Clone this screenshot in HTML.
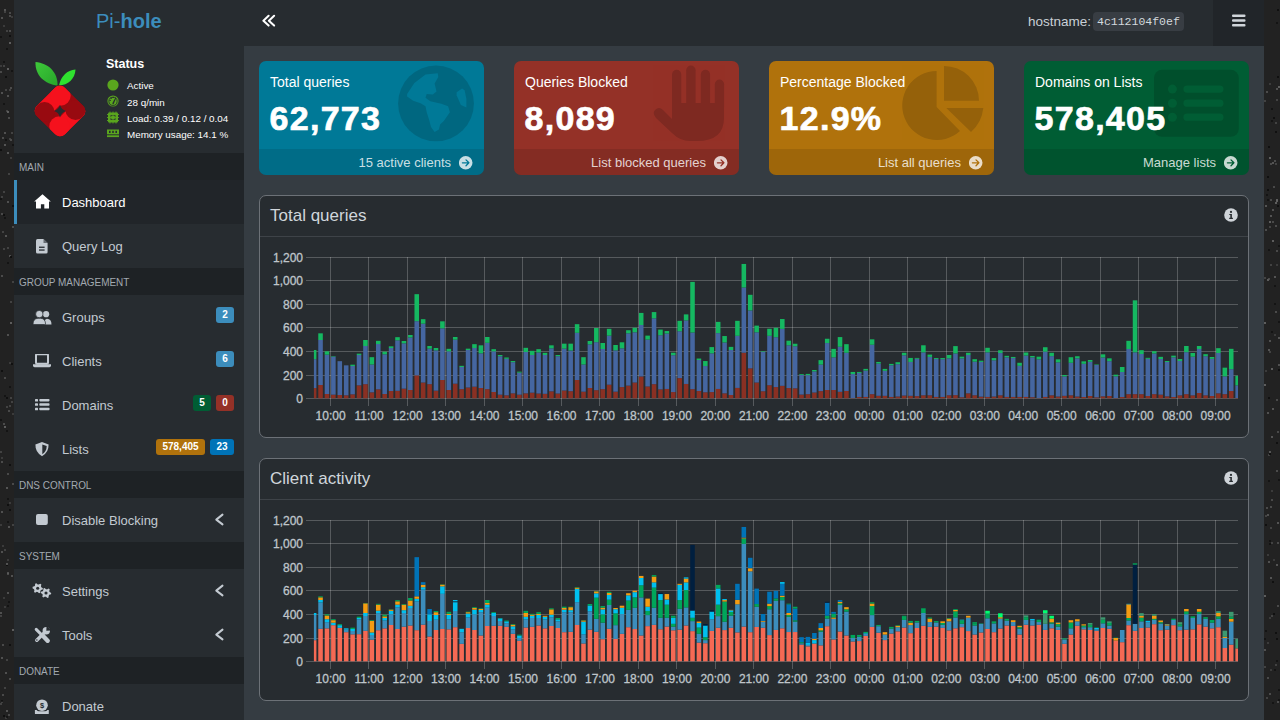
<!DOCTYPE html>
<html><head><meta charset="utf-8">
<style>
*{margin:0;padding:0;box-sizing:border-box}
html,body{width:1280px;height:720px;overflow:hidden;background:#353c42;font-family:"Liberation Sans",sans-serif;color:#c9d0d6}
.abs{position:absolute}
.st{font-size:9.85px;color:#fff;white-space:nowrap;line-height:12px}
#noiseL{left:0;top:0;width:14px;height:720px;background:#222}
#noiseR{left:1264px;top:0;width:16px;height:720px;background:#222}
#side{left:14px;top:0;width:230px;height:720px;background:#272c30;overflow:hidden}
#top{left:244px;top:0;width:1020px;height:46px;background:#272c30}
#burger{left:1213px;top:0;width:51px;height:46px;background:#212529}
.hdr{position:absolute;left:0;width:230px;height:27px;background:#1e2225;color:#a2a9b0;font-size:11.5px;padding-left:5px;line-height:29px}
.hs{display:inline-block;transform:scaleX(0.865);transform-origin:0 50%}
.item{position:absolute;left:0;width:230px;height:44px;color:#c2cad1;font-size:13px;line-height:44px}
.item .lbl{position:absolute;left:48px;top:1px}
.item.active{background:#212529;color:#fff;border-left:3px solid #3c8dbc}
.item svg{position:absolute}
.badge{position:absolute;top:12px;height:16px;border-radius:3px;color:#fff;font-weight:bold;font-size:10px;line-height:15px;text-align:center}
.chev{position:absolute;left:201px;top:16px}
.card{position:absolute;top:61px;width:225px;height:114px;border-radius:7px;overflow:hidden;color:#fff}
.card .ttl{position:absolute;left:11px;top:13px;font-size:14px}
.card .num{position:absolute;left:10.5px;top:38px;font-size:34px;font-weight:bold;letter-spacing:1.3px;-webkit-text-stroke:0.7px #fff}
.card .foot{position:absolute;left:0;top:88px;width:225px;height:26px;background:rgba(0,0,0,0.1)}
.card .ft{position:absolute;right:33px;top:6px;font-size:13px;color:rgba(255,255,255,0.8)}
.card .arr{position:absolute;left:200px;top:6.5px}
.card .ico{position:absolute}
.panel{position:absolute;left:259px;width:990px;background:#272c30;border:1px solid #6c7177;border-radius:7px}
.panel .ph{position:absolute;left:10px;top:10px;font-size:17px;color:#d0d6db}
.panel .sep{position:absolute;left:0;top:40px;width:988px;height:1px;background:#3e4348}
.panel .info{position:absolute;left:964px;top:12px}
#charts{position:absolute;left:0;top:0}
.gl{stroke:#fff;stroke-opacity:0.22;stroke-width:1}
.yl{font-size:12px;fill:#bfc5ca;stroke:#bfc5ca;stroke-width:0.3px;text-anchor:end;font-family:"Liberation Sans",sans-serif}
.xl{font-size:12px;fill:#bfc5ca;stroke:#bfc5ca;stroke-width:0.3px;text-anchor:middle;font-family:"Liberation Sans",sans-serif}
</style></head><body>
<div id="noiseL" class="abs"></div>
<div id="noiseR" class="abs"></div>
<svg style="position:absolute;left:0;top:0" width="1280" height="720"><rect x="7" y="573" width="2" height="2" fill="rgb(80,80,80)" fill-opacity="0.9"/><rect x="8" y="601" width="2" height="2" fill="rgb(14,14,14)" fill-opacity="0.7"/><rect x="12" y="524" width="2" height="2" fill="rgb(80,80,80)" fill-opacity="0.7"/><rect x="1" y="457" width="2" height="2" fill="rgb(70,70,70)" fill-opacity="0.7"/><rect x="1" y="551" width="2" height="2" fill="rgb(100,100,100)" fill-opacity="0.7"/><rect x="9" y="405" width="2" height="2" fill="rgb(80,80,80)" fill-opacity="0.7"/><rect x="9" y="15" width="2" height="2" fill="rgb(90,90,90)" fill-opacity="0.7"/><rect x="0" y="36" width="2" height="2" fill="rgb(14,14,14)" fill-opacity="0.7"/><rect x="9" y="30" width="2" height="2" fill="rgb(80,80,80)" fill-opacity="0.9"/><rect x="7" y="605" width="2" height="2" fill="rgb(14,14,14)" fill-opacity="0.7"/><rect x="10" y="301" width="2" height="2" fill="rgb(80,80,80)" fill-opacity="0.7"/><rect x="10" y="87" width="2" height="2" fill="rgb(80,80,80)" fill-opacity="0.9"/><rect x="6" y="564" width="2" height="2" fill="rgb(14,14,14)" fill-opacity="0.9"/><rect x="5" y="235" width="2" height="2" fill="rgb(90,90,90)" fill-opacity="0.9"/><rect x="0" y="71" width="2" height="2" fill="rgb(90,90,90)" fill-opacity="0.7"/><rect x="6" y="110" width="2" height="2" fill="rgb(70,70,70)" fill-opacity="0.9"/><rect x="1" y="17" width="2" height="2" fill="rgb(100,100,100)" fill-opacity="0.7"/><rect x="3" y="214" width="2" height="2" fill="rgb(14,14,14)" fill-opacity="0.9"/><rect x="6" y="406" width="2" height="2" fill="rgb(80,80,80)" fill-opacity="0.7"/><rect x="9" y="644" width="2" height="2" fill="rgb(14,14,14)" fill-opacity="0.9"/><rect x="5" y="89" width="2" height="2" fill="rgb(70,70,70)" fill-opacity="0.9"/><rect x="0" y="419" width="2" height="2" fill="rgb(14,14,14)" fill-opacity="0.7"/><rect x="3" y="103" width="2" height="2" fill="rgb(14,14,14)" fill-opacity="0.7"/><rect x="7" y="498" width="2" height="2" fill="rgb(14,14,14)" fill-opacity="0.7"/><rect x="7" y="521" width="2" height="2" fill="rgb(14,14,14)" fill-opacity="0.7"/><rect x="6" y="659" width="2" height="2" fill="rgb(80,80,80)" fill-opacity="0.7"/><rect x="6" y="430" width="2" height="2" fill="rgb(14,14,14)" fill-opacity="0.7"/><rect x="4" y="606" width="2" height="2" fill="rgb(70,70,70)" fill-opacity="0.7"/><rect x="3" y="191" width="2" height="2" fill="rgb(80,80,80)" fill-opacity="0.7"/><rect x="0" y="149" width="2" height="2" fill="rgb(14,14,14)" fill-opacity="0.9"/><rect x="4" y="9" width="2" height="2" fill="rgb(90,90,90)" fill-opacity="0.9"/><rect x="4" y="395" width="2" height="2" fill="rgb(14,14,14)" fill-opacity="0.7"/><rect x="1" y="213" width="2" height="2" fill="rgb(90,90,90)" fill-opacity="0.7"/><rect x="0" y="615" width="2" height="2" fill="rgb(70,70,70)" fill-opacity="0.9"/><rect x="9" y="464" width="2" height="2" fill="rgb(14,14,14)" fill-opacity="0.9"/><rect x="9" y="138" width="2" height="2" fill="rgb(80,80,80)" fill-opacity="0.7"/><rect x="10" y="157" width="2" height="2" fill="rgb(70,70,70)" fill-opacity="0.7"/><rect x="9" y="255" width="2" height="2" fill="rgb(100,100,100)" fill-opacity="0.7"/><rect x="2" y="644" width="2" height="2" fill="rgb(90,90,90)" fill-opacity="0.7"/><rect x="10" y="397" width="2" height="2" fill="rgb(80,80,80)" fill-opacity="0.7"/><rect x="6" y="48" width="2" height="2" fill="rgb(14,14,14)" fill-opacity="0.7"/><rect x="0" y="524" width="2" height="2" fill="rgb(70,70,70)" fill-opacity="0.7"/><rect x="11" y="401" width="2" height="2" fill="rgb(70,70,70)" fill-opacity="0.9"/><rect x="9" y="502" width="2" height="2" fill="rgb(70,70,70)" fill-opacity="0.7"/><rect x="11" y="70" width="2" height="2" fill="rgb(14,14,14)" fill-opacity="0.7"/><rect x="7" y="572" width="2" height="2" fill="rgb(100,100,100)" fill-opacity="0.7"/><rect x="4" y="217" width="2" height="2" fill="rgb(14,14,14)" fill-opacity="0.7"/><rect x="1" y="275" width="2" height="2" fill="rgb(80,80,80)" fill-opacity="0.9"/><rect x="3" y="61" width="2" height="2" fill="rgb(14,14,14)" fill-opacity="0.7"/><rect x="4" y="377" width="2" height="2" fill="rgb(90,90,90)" fill-opacity="0.7"/><rect x="1" y="370" width="2" height="2" fill="rgb(14,14,14)" fill-opacity="0.9"/><rect x="5" y="672" width="2" height="2" fill="rgb(100,100,100)" fill-opacity="0.7"/><rect x="9" y="35" width="2" height="2" fill="rgb(14,14,14)" fill-opacity="0.9"/><rect x="5" y="717" width="2" height="2" fill="rgb(70,70,70)" fill-opacity="0.7"/><rect x="0" y="612" width="2" height="2" fill="rgb(100,100,100)" fill-opacity="0.7"/><rect x="7" y="68" width="2" height="2" fill="rgb(100,100,100)" fill-opacity="0.9"/><rect x="5" y="139" width="2" height="2" fill="rgb(14,14,14)" fill-opacity="0.7"/><rect x="7" y="559" width="2" height="2" fill="rgb(70,70,70)" fill-opacity="0.7"/><rect x="11" y="132" width="2" height="2" fill="rgb(70,70,70)" fill-opacity="0.9"/><rect x="1" y="701" width="2" height="2" fill="rgb(80,80,80)" fill-opacity="0.7"/><rect x="6" y="30" width="2" height="2" fill="rgb(80,80,80)" fill-opacity="0.7"/><rect x="9" y="678" width="2" height="2" fill="rgb(80,80,80)" fill-opacity="0.9"/><rect x="9" y="12" width="2" height="2" fill="rgb(90,90,90)" fill-opacity="0.7"/><rect x="1" y="92" width="2" height="2" fill="rgb(100,100,100)" fill-opacity="0.7"/><rect x="4" y="426" width="2" height="2" fill="rgb(100,100,100)" fill-opacity="0.9"/><rect x="6" y="710" width="2" height="2" fill="rgb(90,90,90)" fill-opacity="0.9"/><rect x="7" y="473" width="2" height="2" fill="rgb(90,90,90)" fill-opacity="0.7"/><rect x="8" y="526" width="2" height="2" fill="rgb(14,14,14)" fill-opacity="0.9"/><rect x="9" y="89" width="2" height="2" fill="rgb(80,80,80)" fill-opacity="0.7"/><rect x="3" y="715" width="2" height="2" fill="rgb(14,14,14)" fill-opacity="0.9"/><rect x="12" y="629" width="2" height="2" fill="rgb(100,100,100)" fill-opacity="0.9"/><rect x="4" y="11" width="2" height="2" fill="rgb(70,70,70)" fill-opacity="0.9"/><rect x="2" y="694" width="2" height="2" fill="rgb(90,90,90)" fill-opacity="0.7"/><rect x="8" y="173" width="2" height="2" fill="rgb(70,70,70)" fill-opacity="0.9"/><rect x="7" y="247" width="2" height="2" fill="rgb(70,70,70)" fill-opacity="0.9"/><rect x="10" y="256" width="2" height="2" fill="rgb(14,14,14)" fill-opacity="0.9"/><rect x="12" y="205" width="2" height="2" fill="rgb(14,14,14)" fill-opacity="0.9"/><rect x="3" y="597" width="2" height="2" fill="rgb(70,70,70)" fill-opacity="0.7"/><rect x="2" y="137" width="2" height="2" fill="rgb(80,80,80)" fill-opacity="0.9"/><rect x="0" y="65" width="2" height="2" fill="rgb(70,70,70)" fill-opacity="0.7"/><rect x="1" y="461" width="2" height="2" fill="rgb(80,80,80)" fill-opacity="0.9"/><rect x="3" y="423" width="2" height="2" fill="rgb(80,80,80)" fill-opacity="0.9"/><rect x="10" y="322" width="2" height="2" fill="rgb(100,100,100)" fill-opacity="0.9"/><rect x="5" y="76" width="2" height="2" fill="rgb(14,14,14)" fill-opacity="0.9"/><rect x="9" y="42" width="2" height="2" fill="rgb(100,100,100)" fill-opacity="0.9"/><rect x="9" y="362" width="2" height="2" fill="rgb(70,70,70)" fill-opacity="0.7"/><rect x="10" y="139" width="2" height="2" fill="rgb(80,80,80)" fill-opacity="0.9"/><rect x="3" y="25" width="2" height="2" fill="rgb(70,70,70)" fill-opacity="0.7"/><rect x="12" y="144" width="2" height="2" fill="rgb(14,14,14)" fill-opacity="0.7"/><rect x="7" y="111" width="2" height="2" fill="rgb(100,100,100)" fill-opacity="0.9"/><rect x="1" y="700" width="2" height="2" fill="rgb(14,14,14)" fill-opacity="0.7"/><rect x="7" y="262" width="2" height="2" fill="rgb(14,14,14)" fill-opacity="0.7"/><rect x="12" y="483" width="2" height="2" fill="rgb(90,90,90)" fill-opacity="0.7"/><rect x="2" y="231" width="2" height="2" fill="rgb(70,70,70)" fill-opacity="0.9"/><rect x="8" y="714" width="2" height="2" fill="rgb(90,90,90)" fill-opacity="0.7"/><rect x="6" y="716" width="2" height="2" fill="rgb(14,14,14)" fill-opacity="0.7"/><rect x="6" y="397" width="2" height="2" fill="rgb(14,14,14)" fill-opacity="0.9"/><rect x="7" y="201" width="2" height="2" fill="rgb(100,100,100)" fill-opacity="0.7"/><rect x="6" y="563" width="2" height="2" fill="rgb(90,90,90)" fill-opacity="0.9"/><rect x="7" y="334" width="2" height="2" fill="rgb(100,100,100)" fill-opacity="0.7"/><rect x="1" y="657" width="2" height="2" fill="rgb(100,100,100)" fill-opacity="0.7"/><rect x="3" y="248" width="2" height="2" fill="rgb(80,80,80)" fill-opacity="0.7"/><rect x="4" y="549" width="2" height="2" fill="rgb(70,70,70)" fill-opacity="0.9"/><rect x="11" y="16" width="2" height="2" fill="rgb(70,70,70)" fill-opacity="0.7"/><rect x="0" y="451" width="2" height="2" fill="rgb(70,70,70)" fill-opacity="0.9"/><rect x="12" y="281" width="2" height="2" fill="rgb(80,80,80)" fill-opacity="0.7"/><rect x="3" y="65" width="2" height="2" fill="rgb(80,80,80)" fill-opacity="0.7"/><rect x="2" y="545" width="2" height="2" fill="rgb(70,70,70)" fill-opacity="0.7"/><rect x="7" y="152" width="2" height="2" fill="rgb(90,90,90)" fill-opacity="0.9"/><rect x="7" y="592" width="2" height="2" fill="rgb(100,100,100)" fill-opacity="0.7"/><rect x="12" y="226" width="2" height="2" fill="rgb(80,80,80)" fill-opacity="0.9"/><rect x="11" y="575" width="2" height="2" fill="rgb(100,100,100)" fill-opacity="0.7"/><rect x="8" y="526" width="2" height="2" fill="rgb(90,90,90)" fill-opacity="0.9"/><rect x="4" y="687" width="2" height="2" fill="rgb(80,80,80)" fill-opacity="0.7"/><rect x="4" y="144" width="2" height="2" fill="rgb(90,90,90)" fill-opacity="0.9"/><rect x="9" y="509" width="2" height="2" fill="rgb(14,14,14)" fill-opacity="0.9"/><rect x="8" y="117" width="2" height="2" fill="rgb(90,90,90)" fill-opacity="0.7"/><rect x="9" y="386" width="2" height="2" fill="rgb(14,14,14)" fill-opacity="0.7"/><rect x="8" y="410" width="2" height="2" fill="rgb(90,90,90)" fill-opacity="0.7"/><rect x="7" y="95" width="2" height="2" fill="rgb(100,100,100)" fill-opacity="0.7"/><rect x="1" y="551" width="2" height="2" fill="rgb(80,80,80)" fill-opacity="0.9"/><rect x="12" y="413" width="2" height="2" fill="rgb(70,70,70)" fill-opacity="0.7"/><rect x="7" y="504" width="2" height="2" fill="rgb(14,14,14)" fill-opacity="0.9"/><rect x="6" y="487" width="2" height="2" fill="rgb(90,90,90)" fill-opacity="0.9"/><rect x="1" y="196" width="2" height="2" fill="rgb(80,80,80)" fill-opacity="0.7"/><rect x="4" y="132" width="2" height="2" fill="rgb(100,100,100)" fill-opacity="0.7"/><rect x="0" y="198" width="2" height="2" fill="rgb(14,14,14)" fill-opacity="0.7"/><rect x="0" y="703" width="2" height="2" fill="rgb(70,70,70)" fill-opacity="0.9"/><rect x="11" y="363" width="2" height="2" fill="rgb(14,14,14)" fill-opacity="0.9"/><rect x="1" y="511" width="2" height="2" fill="rgb(100,100,100)" fill-opacity="0.7"/><rect x="1277" y="522" width="2" height="2" fill="rgb(90,90,90)" fill-opacity="0.9"/><rect x="1275" y="202" width="2" height="2" fill="rgb(100,100,100)" fill-opacity="0.9"/><rect x="1264" y="384" width="2" height="2" fill="rgb(100,100,100)" fill-opacity="0.9"/><rect x="1277" y="542" width="2" height="2" fill="rgb(90,90,90)" fill-opacity="0.7"/><rect x="1272" y="209" width="2" height="2" fill="rgb(100,100,100)" fill-opacity="0.7"/><rect x="1272" y="221" width="2" height="2" fill="rgb(90,90,90)" fill-opacity="0.7"/><rect x="1267" y="642" width="2" height="2" fill="rgb(70,70,70)" fill-opacity="0.7"/><rect x="1269" y="617" width="2" height="2" fill="rgb(70,70,70)" fill-opacity="0.7"/><rect x="1267" y="199" width="2" height="2" fill="rgb(14,14,14)" fill-opacity="0.7"/><rect x="1278" y="245" width="2" height="2" fill="rgb(14,14,14)" fill-opacity="0.7"/><rect x="1268" y="397" width="2" height="2" fill="rgb(14,14,14)" fill-opacity="0.9"/><rect x="1277" y="431" width="2" height="2" fill="rgb(90,90,90)" fill-opacity="0.7"/><rect x="1267" y="412" width="2" height="2" fill="rgb(100,100,100)" fill-opacity="0.7"/><rect x="1265" y="205" width="2" height="2" fill="rgb(90,90,90)" fill-opacity="0.9"/><rect x="1278" y="369" width="2" height="2" fill="rgb(14,14,14)" fill-opacity="0.9"/><rect x="1272" y="702" width="2" height="2" fill="rgb(14,14,14)" fill-opacity="0.7"/><rect x="1271" y="108" width="2" height="2" fill="rgb(14,14,14)" fill-opacity="0.7"/><rect x="1276" y="564" width="2" height="2" fill="rgb(90,90,90)" fill-opacity="0.9"/><rect x="1266" y="194" width="2" height="2" fill="rgb(14,14,14)" fill-opacity="0.7"/><rect x="1267" y="176" width="2" height="2" fill="rgb(14,14,14)" fill-opacity="0.9"/><rect x="1278" y="689" width="2" height="2" fill="rgb(14,14,14)" fill-opacity="0.7"/><rect x="1266" y="697" width="2" height="2" fill="rgb(80,80,80)" fill-opacity="0.7"/><rect x="1276" y="99" width="2" height="2" fill="rgb(70,70,70)" fill-opacity="0.9"/><rect x="1271" y="436" width="2" height="2" fill="rgb(90,90,90)" fill-opacity="0.9"/><rect x="1270" y="215" width="2" height="2" fill="rgb(90,90,90)" fill-opacity="0.9"/><rect x="1264" y="649" width="2" height="2" fill="rgb(100,100,100)" fill-opacity="0.7"/><rect x="1277" y="205" width="2" height="2" fill="rgb(14,14,14)" fill-opacity="0.9"/><rect x="1271" y="368" width="2" height="2" fill="rgb(100,100,100)" fill-opacity="0.9"/><rect x="1270" y="199" width="2" height="2" fill="rgb(90,90,90)" fill-opacity="0.7"/><rect x="1265" y="524" width="2" height="2" fill="rgb(14,14,14)" fill-opacity="0.9"/><rect x="1278" y="86" width="2" height="2" fill="rgb(100,100,100)" fill-opacity="0.9"/><rect x="1273" y="613" width="2" height="2" fill="rgb(14,14,14)" fill-opacity="0.9"/><rect x="1276" y="264" width="2" height="2" fill="rgb(70,70,70)" fill-opacity="0.7"/><rect x="1275" y="163" width="2" height="2" fill="rgb(80,80,80)" fill-opacity="0.7"/><rect x="1278" y="337" width="2" height="2" fill="rgb(90,90,90)" fill-opacity="0.9"/><rect x="1276" y="442" width="2" height="2" fill="rgb(14,14,14)" fill-opacity="0.9"/><rect x="1267" y="189" width="2" height="2" fill="rgb(14,14,14)" fill-opacity="0.9"/><rect x="1268" y="480" width="2" height="2" fill="rgb(14,14,14)" fill-opacity="0.7"/><rect x="1278" y="364" width="2" height="2" fill="rgb(100,100,100)" fill-opacity="0.7"/><rect x="1267" y="279" width="2" height="2" fill="rgb(100,100,100)" fill-opacity="0.9"/><rect x="1269" y="221" width="2" height="2" fill="rgb(100,100,100)" fill-opacity="0.9"/><rect x="1273" y="186" width="2" height="2" fill="rgb(90,90,90)" fill-opacity="0.7"/><rect x="1270" y="527" width="2" height="2" fill="rgb(80,80,80)" fill-opacity="0.7"/><rect x="1275" y="122" width="2" height="2" fill="rgb(80,80,80)" fill-opacity="0.7"/><rect x="1265" y="630" width="2" height="2" fill="rgb(14,14,14)" fill-opacity="0.7"/><rect x="1268" y="454" width="2" height="2" fill="rgb(80,80,80)" fill-opacity="0.7"/><rect x="1276" y="200" width="2" height="2" fill="rgb(100,100,100)" fill-opacity="0.9"/><rect x="1264" y="100" width="2" height="2" fill="rgb(70,70,70)" fill-opacity="0.9"/><rect x="1268" y="349" width="2" height="2" fill="rgb(90,90,90)" fill-opacity="0.9"/><rect x="1272" y="581" width="2" height="2" fill="rgb(14,14,14)" fill-opacity="0.9"/><rect x="1276" y="660" width="2" height="2" fill="rgb(14,14,14)" fill-opacity="0.7"/><rect x="1270" y="163" width="2" height="2" fill="rgb(80,80,80)" fill-opacity="0.9"/><rect x="1266" y="507" width="2" height="2" fill="rgb(90,90,90)" fill-opacity="0.7"/><rect x="1270" y="506" width="2" height="2" fill="rgb(80,80,80)" fill-opacity="0.9"/><rect x="1272" y="408" width="2" height="2" fill="rgb(90,90,90)" fill-opacity="0.9"/><rect x="1269" y="543" width="2" height="2" fill="rgb(70,70,70)" fill-opacity="0.9"/><rect x="1274" y="276" width="2" height="2" fill="rgb(90,90,90)" fill-opacity="0.9"/><rect x="1274" y="303" width="2" height="2" fill="rgb(14,14,14)" fill-opacity="0.7"/><rect x="1276" y="250" width="2" height="2" fill="rgb(90,90,90)" fill-opacity="0.7"/><rect x="1274" y="160" width="2" height="2" fill="rgb(80,80,80)" fill-opacity="0.9"/><rect x="1264" y="322" width="2" height="2" fill="rgb(100,100,100)" fill-opacity="0.9"/><rect x="1264" y="595" width="2" height="2" fill="rgb(100,100,100)" fill-opacity="0.9"/><rect x="1265" y="229" width="2" height="2" fill="rgb(80,80,80)" fill-opacity="0.9"/><rect x="1268" y="249" width="2" height="2" fill="rgb(14,14,14)" fill-opacity="0.7"/><rect x="1278" y="479" width="2" height="2" fill="rgb(14,14,14)" fill-opacity="0.7"/><rect x="1273" y="117" width="2" height="2" fill="rgb(14,14,14)" fill-opacity="0.9"/><rect x="1271" y="120" width="2" height="2" fill="rgb(14,14,14)" fill-opacity="0.7"/><rect x="1269" y="540" width="2" height="2" fill="rgb(14,14,14)" fill-opacity="0.7"/><rect x="1269" y="453" width="2" height="2" fill="rgb(14,14,14)" fill-opacity="0.9"/><rect x="1271" y="615" width="2" height="2" fill="rgb(70,70,70)" fill-opacity="0.9"/><rect x="1269" y="543" width="2" height="2" fill="rgb(14,14,14)" fill-opacity="0.9"/><rect x="1275" y="131" width="2" height="2" fill="rgb(14,14,14)" fill-opacity="0.9"/><rect x="1265" y="515" width="2" height="2" fill="rgb(70,70,70)" fill-opacity="0.9"/><rect x="1268" y="278" width="2" height="2" fill="rgb(90,90,90)" fill-opacity="0.7"/><rect x="1274" y="285" width="2" height="2" fill="rgb(14,14,14)" fill-opacity="0.7"/><rect x="1267" y="514" width="2" height="2" fill="rgb(100,100,100)" fill-opacity="0.7"/><rect x="1278" y="699" width="2" height="2" fill="rgb(14,14,14)" fill-opacity="0.7"/><rect x="1264" y="277" width="2" height="2" fill="rgb(70,70,70)" fill-opacity="0.9"/><rect x="1264" y="638" width="2" height="2" fill="rgb(14,14,14)" fill-opacity="0.7"/><rect x="1267" y="554" width="2" height="2" fill="rgb(70,70,70)" fill-opacity="0.7"/><rect x="1276" y="88" width="2" height="2" fill="rgb(100,100,100)" fill-opacity="0.7"/><rect x="1272" y="240" width="2" height="2" fill="rgb(100,100,100)" fill-opacity="0.9"/><rect x="1271" y="490" width="2" height="2" fill="rgb(70,70,70)" fill-opacity="0.7"/><rect x="1269" y="351" width="2" height="2" fill="rgb(80,80,80)" fill-opacity="0.7"/><rect x="1277" y="76" width="2" height="2" fill="rgb(14,14,14)" fill-opacity="0.9"/><rect x="1276" y="638" width="2" height="2" fill="rgb(14,14,14)" fill-opacity="0.9"/><rect x="1270" y="264" width="2" height="2" fill="rgb(80,80,80)" fill-opacity="0.7"/><rect x="1269" y="157" width="2" height="2" fill="rgb(100,100,100)" fill-opacity="0.9"/><rect x="1268" y="561" width="2" height="2" fill="rgb(100,100,100)" fill-opacity="0.7"/><rect x="1270" y="669" width="2" height="2" fill="rgb(70,70,70)" fill-opacity="0.7"/><rect x="1271" y="331" width="2" height="2" fill="rgb(14,14,14)" fill-opacity="0.7"/><rect x="1270" y="577" width="2" height="2" fill="rgb(90,90,90)" fill-opacity="0.9"/><rect x="1277" y="701" width="2" height="2" fill="rgb(80,80,80)" fill-opacity="0.9"/><rect x="1277" y="9" width="2" height="2" fill="rgb(14,14,14)" fill-opacity="0.9"/><rect x="1267" y="677" width="2" height="2" fill="rgb(90,90,90)" fill-opacity="0.7"/><rect x="1275" y="311" width="2" height="2" fill="rgb(80,80,80)" fill-opacity="0.9"/><rect x="1268" y="146" width="2" height="2" fill="rgb(14,14,14)" fill-opacity="0.9"/><rect x="1274" y="334" width="2" height="2" fill="rgb(70,70,70)" fill-opacity="0.7"/><rect x="1269" y="451" width="2" height="2" fill="rgb(90,90,90)" fill-opacity="0.9"/><rect x="1271" y="542" width="2" height="2" fill="rgb(70,70,70)" fill-opacity="0.9"/><rect x="1269" y="226" width="2" height="2" fill="rgb(80,80,80)" fill-opacity="0.7"/><rect x="1265" y="370" width="2" height="2" fill="rgb(70,70,70)" fill-opacity="0.7"/><rect x="1269" y="693" width="2" height="2" fill="rgb(80,80,80)" fill-opacity="0.9"/><rect x="1276" y="199" width="2" height="2" fill="rgb(100,100,100)" fill-opacity="0.9"/><rect x="1276" y="399" width="2" height="2" fill="rgb(90,90,90)" fill-opacity="0.7"/><rect x="1277" y="605" width="2" height="2" fill="rgb(90,90,90)" fill-opacity="0.7"/><rect x="1266" y="91" width="2" height="2" fill="rgb(80,80,80)" fill-opacity="0.9"/><rect x="1276" y="22" width="2" height="2" fill="rgb(14,14,14)" fill-opacity="0.7"/><rect x="1272" y="162" width="2" height="2" fill="rgb(90,90,90)" fill-opacity="0.9"/><rect x="1264" y="666" width="2" height="2" fill="rgb(80,80,80)" fill-opacity="0.7"/><rect x="1273" y="559" width="2" height="2" fill="rgb(70,70,70)" fill-opacity="0.7"/><rect x="1269" y="83" width="2" height="2" fill="rgb(70,70,70)" fill-opacity="0.7"/><rect x="1278" y="321" width="2" height="2" fill="rgb(14,14,14)" fill-opacity="0.7"/><rect x="1274" y="669" width="2" height="2" fill="rgb(14,14,14)" fill-opacity="0.7"/><rect x="1275" y="664" width="2" height="2" fill="rgb(80,80,80)" fill-opacity="0.7"/><rect x="1275" y="225" width="2" height="2" fill="rgb(80,80,80)" fill-opacity="0.9"/><rect x="1276" y="470" width="2" height="2" fill="rgb(80,80,80)" fill-opacity="0.9"/><rect x="1269" y="340" width="2" height="2" fill="rgb(100,100,100)" fill-opacity="0.7"/><rect x="1271" y="499" width="2" height="2" fill="rgb(90,90,90)" fill-opacity="0.7"/><rect x="1275" y="632" width="2" height="2" fill="rgb(14,14,14)" fill-opacity="0.9"/></svg>
<div id="side" class="abs">
  <div class="abs" style="left:82px;top:10px;font-size:20px;color:#3c8dbc">Pi-<b>hole</b></div>
  <svg style="position:absolute;left:-14px;top:0" width="100" height="150" viewBox="0 0 100 150">
<defs><clipPath id="dia"><rect x="-20" y="-20" width="40" height="40" rx="7" transform="translate(60,111) rotate(45)"/></clipPath>
<linearGradient id="lf1" x1="0" y1="0" x2="1" y2="1"><stop offset="0" stop-color="#3ec93a"/><stop offset="1" stop-color="#27a52a"/></linearGradient></defs>
<path d="M57.5,85.5 C45,84 35,76 35.5,62 C48,63 58,72 57.5,85.5 Z" fill="url(#lf1)"/>
<path d="M59,85.5 C61,76 67,70 75.5,69.5 C75,79 68,85 59,85.5 Z" fill="#2fe12f"/>
<g clip-path="url(#dia)">
<rect x="30" y="80" width="60" height="62" fill="#980a10"/>
<path d="M60,95.5 L58,78 L24,111 L44.5,112 L54,111 L60,105 Z" fill="#f5111d"/>
<path d="M60,126.5 L62,144 L96,111 L75.5,110 L66,111 L60,117 Z" fill="#f5111d"/>
<circle cx="60.5" cy="95.5" r="10.2" fill="#f5111d"/>
<circle cx="59.5" cy="126.5" r="10.2" fill="#f5111d"/>
<circle cx="44.5" cy="112" r="10" fill="#980a10"/>
<circle cx="75.5" cy="110" r="10" fill="#980a10"/>
<path d="M60,104.8 Q61.2,109.6 66,111 Q61.2,112.4 60,117.6 Q58.8,112.4 54,111 Q58.8,109.6 60,104.8 Z" fill="#272c30"/>
</g></svg>
  <div class="abs" style="left:92px;top:57px;font-size:12.5px;font-weight:bold;color:#fff">Status</div>
  <svg style="position:absolute;left:-14px;top:0" width="130" height="150" viewBox="0 0 130 150">
<circle cx="113" cy="85" r="5.6" fill="#5aa61e"/>
<circle cx="113" cy="101" r="5.6" fill="#5aa61e"/>
<circle cx="113" cy="101.3" r="4.1" fill="none" stroke="#272c30" stroke-width="0.9"/>
<path d="M112.2,103.6 L115.4,97.6 L116.2,98.1 L113.6,104.2 Z" fill="#272c30"/>
<circle cx="110.2" cy="100.4" r="0.7" fill="#272c30"/><circle cx="111.2" cy="98.2" r="0.7" fill="#272c30"/><circle cx="113.2" cy="97.4" r="0.7" fill="#272c30"/>
<rect x="108" y="112.5" width="10" height="10" rx="1" fill="#5aa61e"/>
<rect x="110.3" y="114.8" width="5.4" height="5.4" fill="#272c30"/>
<rect x="111.2" y="115.7" width="3.6" height="3.6" fill="#5aa61e"/>
<path d="M107,114.5h12M107,117.5h12M107,120.5h12M110,111.5v12M113,111.5v12M116,111.5v12" stroke="#5aa61e" stroke-width="0.9"/>
<rect x="107" y="129.5" width="12" height="4.8" fill="#5aa61e"/>
<rect x="109" y="130.8" width="1.6" height="2.2" fill="#272c30"/>
<rect x="112.2" y="130.8" width="1.6" height="2.2" fill="#272c30"/>
<rect x="115.4" y="130.8" width="1.6" height="2.2" fill="#272c30"/>
<rect x="107" y="135.3" width="12" height="1.8" fill="#5aa61e"/>
</svg><div class="abs st" style="left:113px;top:80.4px">Active</div><div class="abs st" style="left:113px;top:96.6px">28 q/min</div><div class="abs st" style="left:113px;top:113.3px">Load: 0.39 / 0.12 / 0.04</div><div class="abs st" style="left:113px;top:129.1px">Memory usage: 14.1 %</div>
  <div class="hdr" style="top:153px"><span class="hs">MAIN</span></div>
  <div class="item active" style="top:180px"><svg class="abs" style="left:16.8px;top:14.4px;position:absolute" width="17" height="15" viewBox="0 0 17 15" ><path d="M8.5,0.3 L16.8,7.6 L15,7.6 L15,14.5 L10.3,14.5 L10.3,10.3 L6.9,10.3 L6.9,14.5 L2,14.5 L2,7.6 L0.2,7.6 Z" fill="#fff"/></svg><span class="lbl" style="left:45px">Dashboard</span></div>
  <div class="item" style="top:224px"><svg class="abs" style="left:22.3px;top:14.5px;position:absolute" width="12" height="15" viewBox="0 0 12 15" ><path d="M1.5,0 L7.5,0 L11.6,4.1 L11.6,13.1 Q11.6,14.6 10.1,14.6 L1.5,14.6 Q0,14.6 0,13.1 L0,1.5 Q0,0 1.5,0 Z" fill="#c3cad1"/><path d="M7.5,0 L7.5,4.1 L11.6,4.1 Z" fill="#272c30" opacity="0.6"/><rect x="3" y="7.6" width="5.6" height="1.3" fill="#272c30"/><rect x="3" y="10.4" width="5.6" height="1.3" fill="#272c30"/></svg><span class="lbl">Query Log</span></div>
  <div class="hdr" style="top:268px"><span class="hs">GROUP MANAGEMENT</span></div>
  <div class="item" style="top:295px"><svg class="abs" style="left:19px;top:14.5px;position:absolute" width="19" height="15" viewBox="0 0 19 15" ><circle cx="13.1" cy="4.2" r="3.1" fill="#c3cad1"/><path d="M11,14.5 Q11.2,9 14,8.8 Q18.5,9 18.5,14.5 Z" fill="#c3cad1"/><circle cx="6.3" cy="4.1" r="3.7" fill="#c3cad1" stroke="#272c30" stroke-width="0.7"/><path d="M0,14.5 Q0,8.5 5,8.3 L7.6,8.3 Q12.6,8.5 12.6,14.5 Z" fill="#c3cad1" stroke="#272c30" stroke-width="0.7"/></svg><span class="lbl">Groups</span><span class="badge" style="left:202px;width:18px;background:#3c8dbc">2</span></div>
  <div class="item" style="top:339px"><svg class="abs" style="left:19px;top:15px;position:absolute" width="18" height="14" viewBox="0 0 18 14" ><rect x="3" y="0.2" width="12" height="9.6" rx="1" fill="none" stroke="#c3cad1" stroke-width="2"/><path d="M0,10.2 L18,10.2 L18,11.4 Q18,13.2 16.4,13.2 L1.6,13.2 Q0,13.2 0,11.4 Z" fill="#c3cad1"/></svg><span class="lbl">Clients</span><span class="badge" style="left:202px;width:18px;background:#3c8dbc">6</span></div>
  <div class="item" style="top:383px"><svg class="abs" style="left:21px;top:14px;position:absolute" width="15" height="14" viewBox="0 0 15 14" ><rect x="0" y="1.8999999999999986" width="3" height="2.6" rx="0.6" fill="#c3cad1"/><rect x="4.3" y="2.0" width="10.2" height="2.4" rx="0.8" fill="#c3cad1"/><rect x="0" y="6.199999999999999" width="3" height="2.6" rx="0.6" fill="#c3cad1"/><rect x="4.3" y="6.300000000000001" width="10.2" height="2.4" rx="0.8" fill="#c3cad1"/><rect x="0" y="10.7" width="3" height="2.6" rx="0.6" fill="#c3cad1"/><rect x="4.3" y="10.8" width="10.2" height="2.4" rx="0.8" fill="#c3cad1"/></svg><span class="lbl">Domains</span><span class="badge" style="left:179px;width:18px;background:#005d34">5</span><span class="badge" style="left:202px;width:18px;background:#943127">0</span></div>
  <div class="item" style="top:427px"><svg class="abs" style="left:21px;top:14.8px;position:absolute" width="14" height="15" viewBox="0 0 14 15" ><path d="M7,0 L13.6,2.6 Q13.8,10.5 7,14.2 Q0.2,10.5 0.4,2.6 Z" fill="#c3cad1"/><path d="M7.3,2.5 L11.7,4.1 Q11.5,9.8 7.3,12.2 Z" fill="#272c30"/></svg><span class="lbl">Lists</span><span class="badge" style="left:142px;width:49px;background:#b0720c">578,405</span><span class="badge" style="left:196px;width:24px;background:#0073b7">23</span></div>
  <div class="hdr" style="top:471px"><span class="hs">DNS CONTROL</span></div>
  <div class="item" style="top:498px"><svg class="abs" style="left:22.1px;top:16px;position:absolute" width="12" height="11" viewBox="0 0 12 11" ><rect x="0" y="0" width="11.8" height="10.9" rx="2" fill="#c3cad1"/></svg><span class="lbl">Disable Blocking</span><svg class="abs" style="left:200px;top:15px;position:absolute" width="10" height="13" viewBox="0 0 10 13" ><path d="M8.5,1.6 L2.3,6.6 L8.5,11.4" fill="none" stroke="#c3cad1" stroke-width="2" stroke-linecap="round" stroke-linejoin="round"/></svg></div>
  <div class="hdr" style="top:542px"><span class="hs">SYSTEM</span></div>
  <div class="item" style="top:569px"><svg class="abs" style="left:18px;top:13px;position:absolute" width="22" height="20" viewBox="0 0 22 20" ><polygon points="10.90,6.20 10.72,7.55 8.94,8.07 8.35,8.85 8.30,10.70 7.05,11.22 5.70,9.94 4.73,9.82 3.10,10.70 2.02,9.88 2.46,8.07 2.08,7.17 0.50,6.20 0.68,4.85 2.46,4.33 3.05,3.55 3.10,1.70 4.35,1.18 5.70,2.46 6.67,2.58 8.30,1.70 9.38,2.52 8.94,4.33 9.32,5.23" fill="#c3cad1"/><circle cx="5.7" cy="6.2" r="3.22" fill="#c3cad1"/><circle cx="5.7" cy="6.2" r="1.56" fill="#272c30"/><polygon points="19.20,11.00 19.02,12.35 17.24,12.87 16.65,13.65 16.60,15.50 15.35,16.02 14.00,14.74 13.03,14.62 11.40,15.50 10.32,14.68 10.76,12.87 10.38,11.97 8.80,11.00 8.98,9.65 10.76,9.13 11.35,8.35 11.40,6.50 12.65,5.98 14.00,7.26 14.97,7.38 16.60,6.50 17.68,7.32 17.24,9.13 17.62,10.03" fill="#c3cad1"/><circle cx="14" cy="11" r="3.22" fill="#c3cad1"/><circle cx="14" cy="11" r="1.56" fill="#272c30"/></svg><span class="lbl">Settings</span><svg class="abs" style="left:200px;top:15px;position:absolute" width="10" height="13" viewBox="0 0 10 13" ><path d="M8.5,1.6 L2.3,6.6 L8.5,11.4" fill="none" stroke="#c3cad1" stroke-width="2" stroke-linecap="round" stroke-linejoin="round"/></svg></div>
  <div class="item" style="top:613px"><svg class="abs" style="left:20px;top:14px;position:absolute" width="17" height="16" viewBox="0 0 17 16" ><path d="M2.2,2.4 L13.6,13.8" stroke="#c3cad1" stroke-width="3" stroke-linecap="round"/><path d="M9.8,9.8 L13.6,13.8" stroke="#c3cad1" stroke-width="4.4" stroke-linecap="round"/><path d="M2.8,13.2 L10.8,5.2" stroke="#c3cad1" stroke-width="3.4" stroke-linecap="round"/><circle cx="12.3" cy="3.8" r="3.7" fill="#c3cad1"/><path d="M12.3,3.8 L12.6,-1.5 L17.8,3.5 Z" fill="#272c30"/><circle cx="2.9" cy="12.9" r="0.75" fill="#272c30"/></svg><span class="lbl">Tools</span><svg class="abs" style="left:200px;top:15px;position:absolute" width="10" height="13" viewBox="0 0 10 13" ><path d="M8.5,1.6 L2.3,6.6 L8.5,11.4" fill="none" stroke="#c3cad1" stroke-width="2" stroke-linecap="round" stroke-linejoin="round"/></svg></div>
  <div class="hdr" style="top:657px"><span class="hs">DONATE</span></div>
  <div class="item" style="top:684px"><svg class="abs" style="left:20px;top:14px;position:absolute" width="16" height="17" viewBox="0 0 16 17" ><circle cx="8" cy="7.2" r="5.8" fill="#c3cad1"/><text x="8" y="9.8" font-size="7.5" font-weight="bold" text-anchor="middle" fill="#272c30" font-family="Liberation Sans">$</text><path d="M0.9,12 L2.6,12 Q3.5,13.3 5,13.3 L11,13.3 Q12.5,13.3 13.4,12 L14.8,12 L14.8,15.5 Q14.8,16 14.3,16 L1.4,16 Q0.9,16 0.9,15.5 Z" fill="#c3cad1"/></svg><span class="lbl">Donate</span></div>
</div>
<div id="top" class="abs"><svg class="abs" style="left:18px;top:14px;position:absolute" width="14" height="14" viewBox="0 0 14 14" ><path d="M6.6,1.8 L1.4,6.7 L6.6,11.6 M12.1,1.8 L6.9,6.7 L12.1,11.6" fill="none" stroke="#fff" stroke-width="2" stroke-linecap="round" stroke-linejoin="round"/></svg><div class="abs" style="left:784px;top:14px;font-size:13.5px;color:#c9d0d6">hostname:</div><div class="abs" style="left:849px;top:12px;width:91px;height:19px;background:#383d43;border-radius:4px"></div><div class="abs" style="left:853px;top:15px;font-family:'Liberation Mono',monospace;font-size:11.5px;color:#d3d9de">4c112104f0ef</div></div>
<div id="burger" class="abs"><svg class="abs" style="left:19px;top:14px;position:absolute" width="14" height="13" viewBox="0 0 14 13" ><rect x="0" y="0.5" width="13.5" height="2.4" rx="1" fill="#d0d5da"/><rect x="0" y="5.3" width="13.5" height="2.4" rx="1" fill="#d0d5da"/><rect x="0" y="10.1" width="13.5" height="2.4" rx="1" fill="#d0d5da"/></svg></div>
<div class="card" style="left:259px;background:#007997"><svg class="ico" width="225" height="114" viewBox="0 0 225 114" style="left:0;top:0"><circle cx="177" cy="42.4" r="37.9" fill="rgba(0,0,0,0.15)"/><path d="M148.1,33.0 L155.4,22.0 L166.5,13.4 L178.7,12.2 L179.3,15.9 L175.6,22.6 L177.5,30.6 L173.8,33.6 L167.7,33.0 L166.5,36.7 L171.3,40.3 L182.3,42.8 L189.1,45.2 L190.9,51.3 L184.8,59.9 L181.1,63.6 L179.9,68.5 L175.6,70.9 L172.0,66.0 L170.1,58.7 L167.7,51.3 L166.5,45.2 L161.6,42.2 L154.2,39.7 L148.1,35.5 Z" fill="#007997"/><path d="M197.6,31.2 L203.1,27.5 L205.6,29.3 L207.4,37.9 L207.4,46.5 L201.9,44.0 L197.6,34.2 Z" fill="#007997"/></svg><div class="ttl">Total queries</div><div class="num">62,773</div><div class="foot"><div class="ft">15 active clients</div><svg class="abs" style="left:200px;top:6.5px;position:absolute" width="14" height="14" viewBox="0 0 14 14" ><circle cx="6.7" cy="6.8" r="6.8" fill="rgba(255,255,255,0.78)"/><path d="M3.4,6.8 L9.9,6.8 M7,3.9 L9.9,6.8 L7,9.7" fill="none" stroke="#007997" stroke-width="1.3" stroke-linecap="round" stroke-linejoin="round"/></svg></div></div>
<div class="card" style="left:514px;background:#943127"><svg class="ico" width="225" height="114" viewBox="0 0 225 114" style="left:0;top:0"><g fill="#000" opacity="0.15"><path d="M158,42 L210,42 L210,57 Q210,80 183,80 L176,80 Q166,80 158,72 L142,57 Q138,52 141,49 Q145,45 149,49 L158,58 Z"/><rect x="158" y="8.8" width="9.3" height="40" rx="4.65"/><rect x="172.2" y="4.6" width="9.4" height="45" rx="4.7"/><rect x="186.8" y="8.8" width="9.3" height="40" rx="4.65"/><rect x="200.8" y="18.6" width="9.3" height="32" rx="4.65"/></g></svg><div class="ttl">Queries Blocked</div><div class="num">8,089</div><div class="foot"><div class="ft">List blocked queries</div><svg class="abs" style="left:200px;top:6.5px;position:absolute" width="14" height="14" viewBox="0 0 14 14" ><circle cx="6.7" cy="6.8" r="6.8" fill="rgba(255,255,255,0.78)"/><path d="M3.4,6.8 L9.9,6.8 M7,3.9 L9.9,6.8 L7,9.7" fill="none" stroke="#943127" stroke-width="1.3" stroke-linecap="round" stroke-linejoin="round"/></svg></div></div>
<div class="card" style="left:769px;background:#b0720c"><svg class="ico" width="225" height="114" viewBox="0 0 225 114" style="left:0;top:0"><g fill="#000" opacity="0.15"><path d="M167.6,10 L167.6,46 L191,70 A34.5,34.5 0 1 1 167.6,10 Z"/><path d="M175,4.9 A35,35 0 0 1 210,39.7 L175,39.7 Z"/><path d="M177.3,47 L214.3,47 A37,37 0 0 1 202,71 Z"/></g></svg><div class="ttl">Percentage Blocked</div><div class="num">12.9%</div><div class="foot"><div class="ft">List all queries</div><svg class="abs" style="left:200px;top:6.5px;position:absolute" width="14" height="14" viewBox="0 0 14 14" ><circle cx="6.7" cy="6.8" r="6.8" fill="rgba(255,255,255,0.78)"/><path d="M3.4,6.8 L9.9,6.8 M7,3.9 L9.9,6.8 L7,9.7" fill="none" stroke="#b0720c" stroke-width="1.3" stroke-linecap="round" stroke-linejoin="round"/></svg></div></div>
<div class="card" style="left:1024px;background:#005d34"><svg class="ico" width="225" height="114" viewBox="0 0 225 114" style="left:0;top:0"><rect x="130" y="8.8" width="84.8" height="67" rx="8" fill="rgba(0,0,0,0.15)"/><g fill="#005d34"><circle cx="148.4" cy="28.1" r="4.5"/><circle cx="148.4" cy="42.2" r="4.5"/><circle cx="148.4" cy="56.2" r="4.5"/><rect x="159.4" y="24.4" width="40.1" height="7.3" rx="3.65"/><rect x="159.4" y="38.5" width="40.1" height="7.3" rx="3.65"/><rect x="159.4" y="52.5" width="40.1" height="7.3" rx="3.65"/></g></svg><div class="ttl">Domains on Lists</div><div class="num">578,405</div><div class="foot"><div class="ft">Manage lists</div><svg class="abs" style="left:200px;top:6.5px;position:absolute" width="14" height="14" viewBox="0 0 14 14" ><circle cx="6.7" cy="6.8" r="6.8" fill="rgba(255,255,255,0.78)"/><path d="M3.4,6.8 L9.9,6.8 M7,3.9 L9.9,6.8 L7,9.7" fill="none" stroke="#005d34" stroke-width="1.3" stroke-linecap="round" stroke-linejoin="round"/></svg></div></div>
<div class="panel" style="top:195px;height:243px"><div class="ph">Total queries</div><div class="sep"></div><svg class="abs" style="left:964px;top:12px;position:absolute" width="14" height="14" viewBox="0 0 14 14" ><circle cx="7" cy="7" r="6.8" fill="#cfd4d9"/><circle cx="7" cy="3.9" r="1.1" fill="#272c30"/><path d="M5.3,6 L7.9,6 L7.9,9.8 L8.9,9.8 L8.9,11 L5.2,11 L5.2,9.8 L6.3,9.8 L6.3,7.1 L5.3,7.1 Z" fill="#272c30"/></svg></div>
<div class="panel" style="top:458px;height:243px"><div class="ph">Client activity</div><div class="sep"></div><svg class="abs" style="left:964px;top:12px;position:absolute" width="14" height="14" viewBox="0 0 14 14" ><circle cx="7" cy="7" r="6.8" fill="#cfd4d9"/><circle cx="7" cy="3.9" r="1.1" fill="#272c30"/><path d="M5.3,6 L7.9,6 L7.9,9.8 L8.9,9.8 L8.9,11 L5.2,11 L5.2,9.8 L6.3,9.8 L6.3,7.1 L5.3,7.1 Z" fill="#272c30"/></svg></div>
<svg id="charts" width="1280" height="720" viewBox="0 0 1280 720">
<line x1="306" y1="257.5" x2="1238" y2="257.5" class="gl"/>
<text x="303" y="261.8" class="yl">1,200</text>
<line x1="306" y1="280.5" x2="1238" y2="280.5" class="gl"/>
<text x="303" y="284.8" class="yl">1,000</text>
<line x1="306" y1="304.5" x2="1238" y2="304.5" class="gl"/>
<text x="303" y="308.8" class="yl">800</text>
<line x1="306" y1="327.5" x2="1238" y2="327.5" class="gl"/>
<text x="303" y="331.8" class="yl">600</text>
<line x1="306" y1="351.5" x2="1238" y2="351.5" class="gl"/>
<text x="303" y="355.8" class="yl">400</text>
<line x1="306" y1="375.5" x2="1238" y2="375.5" class="gl"/>
<text x="303" y="379.8" class="yl">200</text>
<line x1="306" y1="398.5" x2="1238" y2="398.5" class="gl"/>
<text x="303" y="402.8" class="yl">0</text>
<line x1="330.5" y1="257" x2="330.5" y2="406" class="gl"/>
<text x="330.6" y="420" class="xl">10:00</text>
<line x1="368.5" y1="257" x2="368.5" y2="406" class="gl"/>
<text x="369.1" y="420" class="xl">11:00</text>
<line x1="407.5" y1="257" x2="407.5" y2="406" class="gl"/>
<text x="407.6" y="420" class="xl">12:00</text>
<line x1="445.5" y1="257" x2="445.5" y2="406" class="gl"/>
<text x="446.0" y="420" class="xl">13:00</text>
<line x1="484.5" y1="257" x2="484.5" y2="406" class="gl"/>
<text x="484.5" y="420" class="xl">14:00</text>
<line x1="522.5" y1="257" x2="522.5" y2="406" class="gl"/>
<text x="523.0" y="420" class="xl">15:00</text>
<line x1="561.5" y1="257" x2="561.5" y2="406" class="gl"/>
<text x="561.5" y="420" class="xl">16:00</text>
<line x1="599.5" y1="257" x2="599.5" y2="406" class="gl"/>
<text x="600.0" y="420" class="xl">17:00</text>
<line x1="638.5" y1="257" x2="638.5" y2="406" class="gl"/>
<text x="638.4" y="420" class="xl">18:00</text>
<line x1="676.5" y1="257" x2="676.5" y2="406" class="gl"/>
<text x="676.9" y="420" class="xl">19:00</text>
<line x1="715.5" y1="257" x2="715.5" y2="406" class="gl"/>
<text x="715.4" y="420" class="xl">20:00</text>
<line x1="753.5" y1="257" x2="753.5" y2="406" class="gl"/>
<text x="753.9" y="420" class="xl">21:00</text>
<line x1="792.5" y1="257" x2="792.5" y2="406" class="gl"/>
<text x="792.4" y="420" class="xl">22:00</text>
<line x1="830.5" y1="257" x2="830.5" y2="406" class="gl"/>
<text x="830.8" y="420" class="xl">23:00</text>
<line x1="869.5" y1="257" x2="869.5" y2="406" class="gl"/>
<text x="869.3" y="420" class="xl">00:00</text>
<line x1="907.5" y1="257" x2="907.5" y2="406" class="gl"/>
<text x="907.8" y="420" class="xl">01:00</text>
<line x1="946.5" y1="257" x2="946.5" y2="406" class="gl"/>
<text x="946.3" y="420" class="xl">02:00</text>
<line x1="984.5" y1="257" x2="984.5" y2="406" class="gl"/>
<text x="984.8" y="420" class="xl">03:00</text>
<line x1="1023.5" y1="257" x2="1023.5" y2="406" class="gl"/>
<text x="1023.2" y="420" class="xl">04:00</text>
<line x1="1061.5" y1="257" x2="1061.5" y2="406" class="gl"/>
<text x="1061.7" y="420" class="xl">05:00</text>
<line x1="1100.5" y1="257" x2="1100.5" y2="406" class="gl"/>
<text x="1100.2" y="420" class="xl">06:00</text>
<line x1="1138.5" y1="257" x2="1138.5" y2="406" class="gl"/>
<text x="1138.7" y="420" class="xl">07:00</text>
<line x1="1177.5" y1="257" x2="1177.5" y2="406" class="gl"/>
<text x="1177.2" y="420" class="xl">08:00</text>
<line x1="1215.5" y1="257" x2="1215.5" y2="406" class="gl"/>
<text x="1215.6" y="420" class="xl">09:00</text>
<rect x="313.90" y="388.00" width="2.50" height="10.30" fill="#8a3023"/>
<rect x="313.90" y="359.17" width="2.50" height="28.83" fill="#4566a1"/>
<rect x="313.90" y="350.00" width="2.50" height="9.17" fill="#15b861"/>
<rect x="318.27" y="385.00" width="4.55" height="13.30" fill="#8a3023"/>
<rect x="318.27" y="340.00" width="4.55" height="45.00" fill="#4566a1"/>
<rect x="318.27" y="333.33" width="4.55" height="6.67" fill="#15b861"/>
<rect x="324.69" y="394.00" width="4.55" height="4.30" fill="#8a3023"/>
<rect x="324.69" y="354.67" width="4.55" height="39.33" fill="#4566a1"/>
<rect x="324.69" y="351.33" width="4.55" height="3.33" fill="#15b861"/>
<rect x="331.10" y="394.67" width="4.55" height="3.63" fill="#8a3023"/>
<rect x="331.10" y="356.67" width="4.55" height="38.00" fill="#4566a1"/>
<rect x="331.10" y="356.17" width="4.55" height="0.50" fill="#15b861"/>
<rect x="337.51" y="395.00" width="4.55" height="3.30" fill="#8a3023"/>
<rect x="337.51" y="361.17" width="4.55" height="33.83" fill="#4566a1"/>
<rect x="343.93" y="395.33" width="4.55" height="2.97" fill="#8a3023"/>
<rect x="343.93" y="365.33" width="4.55" height="30.00" fill="#4566a1"/>
<rect x="350.34" y="394.33" width="4.55" height="3.97" fill="#8a3023"/>
<rect x="350.34" y="366.00" width="4.55" height="28.33" fill="#4566a1"/>
<rect x="350.34" y="364.67" width="4.55" height="1.33" fill="#15b861"/>
<rect x="356.75" y="385.33" width="4.55" height="12.97" fill="#8a3023"/>
<rect x="356.75" y="355.00" width="4.55" height="30.33" fill="#4566a1"/>
<rect x="356.75" y="353.67" width="4.55" height="1.33" fill="#15b861"/>
<rect x="363.17" y="384.17" width="4.55" height="14.13" fill="#8a3023"/>
<rect x="363.17" y="346.00" width="4.55" height="38.17" fill="#4566a1"/>
<rect x="363.17" y="340.00" width="4.55" height="6.00" fill="#15b861"/>
<rect x="369.58" y="392.33" width="4.55" height="5.97" fill="#8a3023"/>
<rect x="369.58" y="364.50" width="4.55" height="27.83" fill="#4566a1"/>
<rect x="369.58" y="357.17" width="4.55" height="7.33" fill="#15b861"/>
<rect x="375.99" y="389.33" width="4.55" height="8.97" fill="#8a3023"/>
<rect x="375.99" y="344.00" width="4.55" height="45.33" fill="#4566a1"/>
<rect x="375.99" y="340.83" width="4.55" height="3.17" fill="#15b861"/>
<rect x="382.41" y="394.00" width="4.55" height="4.30" fill="#8a3023"/>
<rect x="382.41" y="354.33" width="4.55" height="39.67" fill="#4566a1"/>
<rect x="382.41" y="351.67" width="4.55" height="2.67" fill="#15b861"/>
<rect x="388.82" y="391.00" width="4.55" height="7.30" fill="#8a3023"/>
<rect x="388.82" y="348.00" width="4.55" height="43.00" fill="#4566a1"/>
<rect x="388.82" y="346.33" width="4.55" height="1.67" fill="#15b861"/>
<rect x="395.23" y="390.83" width="4.55" height="7.47" fill="#8a3023"/>
<rect x="395.23" y="340.33" width="4.55" height="50.50" fill="#4566a1"/>
<rect x="395.23" y="337.17" width="4.55" height="3.17" fill="#15b861"/>
<rect x="401.65" y="388.67" width="4.55" height="9.63" fill="#8a3023"/>
<rect x="401.65" y="343.33" width="4.55" height="45.33" fill="#4566a1"/>
<rect x="401.65" y="341.00" width="4.55" height="2.33" fill="#15b861"/>
<rect x="408.06" y="390.00" width="4.55" height="8.30" fill="#8a3023"/>
<rect x="408.06" y="337.50" width="4.55" height="52.50" fill="#4566a1"/>
<rect x="408.06" y="335.00" width="4.55" height="2.50" fill="#15b861"/>
<rect x="414.47" y="375.33" width="4.55" height="22.97" fill="#8a3023"/>
<rect x="414.47" y="321.17" width="4.55" height="54.17" fill="#4566a1"/>
<rect x="414.47" y="294.17" width="4.55" height="27.00" fill="#15b861"/>
<rect x="420.89" y="382.50" width="4.55" height="15.80" fill="#8a3023"/>
<rect x="420.89" y="323.67" width="4.55" height="58.83" fill="#4566a1"/>
<rect x="420.89" y="319.17" width="4.55" height="4.50" fill="#15b861"/>
<rect x="427.30" y="384.17" width="4.55" height="14.13" fill="#8a3023"/>
<rect x="427.30" y="348.67" width="4.55" height="35.50" fill="#4566a1"/>
<rect x="427.30" y="346.00" width="4.55" height="2.67" fill="#15b861"/>
<rect x="433.71" y="390.67" width="4.55" height="7.63" fill="#8a3023"/>
<rect x="433.71" y="350.33" width="4.55" height="40.33" fill="#4566a1"/>
<rect x="433.71" y="348.00" width="4.55" height="2.33" fill="#15b861"/>
<rect x="440.13" y="380.00" width="4.55" height="18.30" fill="#8a3023"/>
<rect x="440.13" y="328.33" width="4.55" height="51.67" fill="#4566a1"/>
<rect x="440.13" y="321.33" width="4.55" height="7.00" fill="#15b861"/>
<rect x="446.54" y="390.00" width="4.55" height="8.30" fill="#8a3023"/>
<rect x="446.54" y="351.33" width="4.55" height="38.67" fill="#4566a1"/>
<rect x="446.54" y="348.83" width="4.55" height="2.50" fill="#15b861"/>
<rect x="452.95" y="383.67" width="4.55" height="14.63" fill="#8a3023"/>
<rect x="452.95" y="339.67" width="4.55" height="44.00" fill="#4566a1"/>
<rect x="452.95" y="337.00" width="4.55" height="2.67" fill="#15b861"/>
<rect x="459.37" y="389.17" width="4.55" height="9.13" fill="#8a3023"/>
<rect x="459.37" y="367.00" width="4.55" height="22.17" fill="#4566a1"/>
<rect x="459.37" y="365.83" width="4.55" height="1.17" fill="#15b861"/>
<rect x="465.78" y="387.50" width="4.55" height="10.80" fill="#8a3023"/>
<rect x="465.78" y="350.00" width="4.55" height="37.50" fill="#4566a1"/>
<rect x="465.78" y="348.67" width="4.55" height="1.33" fill="#15b861"/>
<rect x="472.19" y="386.67" width="4.55" height="11.63" fill="#8a3023"/>
<rect x="472.19" y="348.00" width="4.55" height="38.67" fill="#4566a1"/>
<rect x="472.19" y="344.17" width="4.55" height="3.83" fill="#15b861"/>
<rect x="478.61" y="388.00" width="4.55" height="10.30" fill="#8a3023"/>
<rect x="478.61" y="353.33" width="4.55" height="34.67" fill="#4566a1"/>
<rect x="478.61" y="345.33" width="4.55" height="8.00" fill="#15b861"/>
<rect x="485.02" y="389.17" width="4.55" height="9.13" fill="#8a3023"/>
<rect x="485.02" y="342.83" width="4.55" height="46.33" fill="#4566a1"/>
<rect x="485.02" y="337.00" width="4.55" height="5.83" fill="#15b861"/>
<rect x="491.43" y="392.00" width="4.55" height="6.30" fill="#8a3023"/>
<rect x="491.43" y="351.33" width="4.55" height="40.67" fill="#4566a1"/>
<rect x="491.43" y="349.17" width="4.55" height="2.17" fill="#15b861"/>
<rect x="497.85" y="394.67" width="4.55" height="3.63" fill="#8a3023"/>
<rect x="497.85" y="356.17" width="4.55" height="38.50" fill="#4566a1"/>
<rect x="497.85" y="355.00" width="4.55" height="1.17" fill="#15b861"/>
<rect x="504.26" y="395.33" width="4.55" height="2.97" fill="#8a3023"/>
<rect x="504.26" y="358.83" width="4.55" height="36.50" fill="#4566a1"/>
<rect x="504.26" y="357.50" width="4.55" height="1.33" fill="#15b861"/>
<rect x="510.67" y="393.33" width="4.55" height="4.97" fill="#8a3023"/>
<rect x="510.67" y="362.17" width="4.55" height="31.17" fill="#4566a1"/>
<rect x="510.67" y="361.00" width="4.55" height="1.17" fill="#15b861"/>
<rect x="517.09" y="394.67" width="4.55" height="3.63" fill="#8a3023"/>
<rect x="517.09" y="372.67" width="4.55" height="22.00" fill="#4566a1"/>
<rect x="517.09" y="371.67" width="4.55" height="1.00" fill="#15b861"/>
<rect x="523.50" y="393.33" width="4.55" height="4.97" fill="#8a3023"/>
<rect x="523.50" y="352.00" width="4.55" height="41.33" fill="#4566a1"/>
<rect x="523.50" y="347.83" width="4.55" height="4.17" fill="#15b861"/>
<rect x="529.91" y="392.67" width="4.55" height="5.63" fill="#8a3023"/>
<rect x="529.91" y="355.00" width="4.55" height="37.67" fill="#4566a1"/>
<rect x="529.91" y="350.83" width="4.55" height="4.17" fill="#15b861"/>
<rect x="536.33" y="393.50" width="4.55" height="4.80" fill="#8a3023"/>
<rect x="536.33" y="352.50" width="4.55" height="41.00" fill="#4566a1"/>
<rect x="536.33" y="349.17" width="4.55" height="3.33" fill="#15b861"/>
<rect x="542.74" y="393.83" width="4.55" height="4.47" fill="#8a3023"/>
<rect x="542.74" y="355.00" width="4.55" height="38.83" fill="#4566a1"/>
<rect x="542.74" y="352.83" width="4.55" height="2.17" fill="#15b861"/>
<rect x="549.15" y="391.33" width="4.55" height="6.97" fill="#8a3023"/>
<rect x="549.15" y="348.33" width="4.55" height="43.00" fill="#4566a1"/>
<rect x="549.15" y="345.33" width="4.55" height="3.00" fill="#15b861"/>
<rect x="555.57" y="393.50" width="4.55" height="4.80" fill="#8a3023"/>
<rect x="555.57" y="356.17" width="4.55" height="37.33" fill="#4566a1"/>
<rect x="555.57" y="355.00" width="4.55" height="1.17" fill="#15b861"/>
<rect x="561.98" y="390.50" width="4.55" height="7.80" fill="#8a3023"/>
<rect x="561.98" y="348.67" width="4.55" height="41.83" fill="#4566a1"/>
<rect x="561.98" y="343.67" width="4.55" height="5.00" fill="#15b861"/>
<rect x="568.39" y="391.17" width="4.55" height="7.13" fill="#8a3023"/>
<rect x="568.39" y="350.50" width="4.55" height="40.67" fill="#4566a1"/>
<rect x="568.39" y="343.67" width="4.55" height="6.83" fill="#15b861"/>
<rect x="574.81" y="380.00" width="4.55" height="18.30" fill="#8a3023"/>
<rect x="574.81" y="332.83" width="4.55" height="47.17" fill="#4566a1"/>
<rect x="574.81" y="324.17" width="4.55" height="8.67" fill="#15b861"/>
<rect x="581.22" y="391.67" width="4.55" height="6.63" fill="#8a3023"/>
<rect x="581.22" y="364.50" width="4.55" height="27.17" fill="#4566a1"/>
<rect x="581.22" y="357.17" width="4.55" height="7.33" fill="#15b861"/>
<rect x="587.63" y="388.00" width="4.55" height="10.30" fill="#8a3023"/>
<rect x="587.63" y="344.33" width="4.55" height="43.67" fill="#4566a1"/>
<rect x="587.63" y="341.00" width="4.55" height="3.33" fill="#15b861"/>
<rect x="594.05" y="390.17" width="4.55" height="8.13" fill="#8a3023"/>
<rect x="594.05" y="342.17" width="4.55" height="48.00" fill="#4566a1"/>
<rect x="594.05" y="328.00" width="4.55" height="14.17" fill="#15b861"/>
<rect x="600.46" y="389.17" width="4.55" height="9.13" fill="#8a3023"/>
<rect x="600.46" y="349.00" width="4.55" height="40.17" fill="#4566a1"/>
<rect x="600.46" y="343.00" width="4.55" height="6.00" fill="#15b861"/>
<rect x="606.87" y="384.67" width="4.55" height="13.63" fill="#8a3023"/>
<rect x="606.87" y="335.67" width="4.55" height="49.00" fill="#4566a1"/>
<rect x="606.87" y="328.83" width="4.55" height="6.83" fill="#15b861"/>
<rect x="613.29" y="391.67" width="4.55" height="6.63" fill="#8a3023"/>
<rect x="613.29" y="350.33" width="4.55" height="41.33" fill="#4566a1"/>
<rect x="613.29" y="345.00" width="4.55" height="5.33" fill="#15b861"/>
<rect x="619.70" y="387.08" width="4.55" height="11.22" fill="#8a3023"/>
<rect x="619.70" y="348.33" width="4.55" height="38.75" fill="#4566a1"/>
<rect x="619.70" y="342.29" width="4.55" height="6.04" fill="#15b861"/>
<rect x="626.11" y="385.62" width="4.55" height="12.68" fill="#8a3023"/>
<rect x="626.11" y="333.33" width="4.55" height="52.29" fill="#4566a1"/>
<rect x="626.11" y="330.21" width="4.55" height="3.12" fill="#15b861"/>
<rect x="632.52" y="382.50" width="4.55" height="15.80" fill="#8a3023"/>
<rect x="632.52" y="332.29" width="4.55" height="50.21" fill="#4566a1"/>
<rect x="632.52" y="327.71" width="4.55" height="4.58" fill="#15b861"/>
<rect x="638.94" y="376.46" width="4.55" height="21.84" fill="#8a3023"/>
<rect x="638.94" y="325.00" width="4.55" height="51.46" fill="#4566a1"/>
<rect x="638.94" y="312.92" width="4.55" height="12.08" fill="#15b861"/>
<rect x="645.35" y="386.46" width="4.55" height="11.84" fill="#8a3023"/>
<rect x="645.35" y="339.58" width="4.55" height="46.88" fill="#4566a1"/>
<rect x="645.35" y="335.62" width="4.55" height="3.96" fill="#15b861"/>
<rect x="651.76" y="384.17" width="4.55" height="14.13" fill="#8a3023"/>
<rect x="651.76" y="318.33" width="4.55" height="65.83" fill="#4566a1"/>
<rect x="651.76" y="312.08" width="4.55" height="6.25" fill="#15b861"/>
<rect x="658.18" y="389.38" width="4.55" height="8.93" fill="#8a3023"/>
<rect x="658.18" y="335.21" width="4.55" height="54.17" fill="#4566a1"/>
<rect x="658.18" y="329.58" width="4.55" height="5.62" fill="#15b861"/>
<rect x="664.59" y="388.96" width="4.55" height="9.34" fill="#8a3023"/>
<rect x="664.59" y="333.54" width="4.55" height="55.42" fill="#4566a1"/>
<rect x="664.59" y="331.04" width="4.55" height="2.50" fill="#15b861"/>
<rect x="671.00" y="392.08" width="4.55" height="6.22" fill="#8a3023"/>
<rect x="671.00" y="355.21" width="4.55" height="36.88" fill="#4566a1"/>
<rect x="671.00" y="352.71" width="4.55" height="2.50" fill="#15b861"/>
<rect x="677.42" y="378.12" width="4.55" height="20.18" fill="#8a3023"/>
<rect x="677.42" y="331.25" width="4.55" height="46.88" fill="#4566a1"/>
<rect x="677.42" y="320.83" width="4.55" height="10.42" fill="#15b861"/>
<rect x="683.83" y="383.96" width="4.55" height="14.34" fill="#8a3023"/>
<rect x="683.83" y="320.42" width="4.55" height="63.54" fill="#4566a1"/>
<rect x="683.83" y="314.38" width="4.55" height="6.04" fill="#15b861"/>
<rect x="690.24" y="389.17" width="4.55" height="9.13" fill="#8a3023"/>
<rect x="690.24" y="332.50" width="4.55" height="56.67" fill="#4566a1"/>
<rect x="690.24" y="281.88" width="4.55" height="50.62" fill="#15b861"/>
<rect x="696.66" y="391.04" width="4.55" height="7.26" fill="#8a3023"/>
<rect x="696.66" y="360.00" width="4.55" height="31.04" fill="#4566a1"/>
<rect x="696.66" y="358.54" width="4.55" height="1.46" fill="#15b861"/>
<rect x="703.07" y="392.29" width="4.55" height="6.01" fill="#8a3023"/>
<rect x="703.07" y="366.04" width="4.55" height="26.25" fill="#4566a1"/>
<rect x="703.07" y="361.04" width="4.55" height="5.00" fill="#15b861"/>
<rect x="709.48" y="392.08" width="4.55" height="6.22" fill="#8a3023"/>
<rect x="709.48" y="353.33" width="4.55" height="38.75" fill="#4566a1"/>
<rect x="709.48" y="347.08" width="4.55" height="6.25" fill="#15b861"/>
<rect x="715.90" y="388.96" width="4.55" height="9.34" fill="#8a3023"/>
<rect x="715.90" y="333.12" width="4.55" height="55.83" fill="#4566a1"/>
<rect x="715.90" y="321.88" width="4.55" height="11.25" fill="#15b861"/>
<rect x="722.31" y="393.33" width="4.55" height="4.97" fill="#8a3023"/>
<rect x="722.31" y="342.50" width="4.55" height="50.83" fill="#4566a1"/>
<rect x="722.31" y="336.04" width="4.55" height="6.46" fill="#15b861"/>
<rect x="728.72" y="395.00" width="4.55" height="3.30" fill="#8a3023"/>
<rect x="728.72" y="350.00" width="4.55" height="45.00" fill="#4566a1"/>
<rect x="728.72" y="346.88" width="4.55" height="3.12" fill="#15b861"/>
<rect x="735.14" y="387.92" width="4.55" height="10.38" fill="#8a3023"/>
<rect x="735.14" y="335.83" width="4.55" height="52.08" fill="#4566a1"/>
<rect x="735.14" y="320.83" width="4.55" height="15.00" fill="#15b861"/>
<rect x="741.55" y="352.71" width="4.55" height="45.59" fill="#8a3023"/>
<rect x="741.55" y="287.50" width="4.55" height="65.21" fill="#4566a1"/>
<rect x="741.55" y="263.96" width="4.55" height="23.54" fill="#15b861"/>
<rect x="747.96" y="368.33" width="4.55" height="29.97" fill="#8a3023"/>
<rect x="747.96" y="310.42" width="4.55" height="57.92" fill="#4566a1"/>
<rect x="747.96" y="294.79" width="4.55" height="15.62" fill="#15b861"/>
<rect x="754.38" y="382.50" width="4.55" height="15.80" fill="#8a3023"/>
<rect x="754.38" y="332.29" width="4.55" height="50.21" fill="#4566a1"/>
<rect x="754.38" y="325.62" width="4.55" height="6.67" fill="#15b861"/>
<rect x="760.79" y="391.25" width="4.55" height="7.05" fill="#8a3023"/>
<rect x="760.79" y="351.67" width="4.55" height="39.58" fill="#4566a1"/>
<rect x="760.79" y="351.04" width="4.55" height="0.62" fill="#15b861"/>
<rect x="767.20" y="385.21" width="4.55" height="13.09" fill="#8a3023"/>
<rect x="767.20" y="335.83" width="4.55" height="49.38" fill="#4566a1"/>
<rect x="767.20" y="328.75" width="4.55" height="7.08" fill="#15b861"/>
<rect x="773.62" y="387.08" width="4.55" height="11.22" fill="#8a3023"/>
<rect x="773.62" y="337.22" width="4.55" height="49.86" fill="#4566a1"/>
<rect x="773.62" y="327.78" width="4.55" height="9.44" fill="#15b861"/>
<rect x="780.03" y="385.83" width="4.55" height="12.47" fill="#8a3023"/>
<rect x="780.03" y="328.89" width="4.55" height="56.94" fill="#4566a1"/>
<rect x="780.03" y="319.03" width="4.55" height="9.86" fill="#15b861"/>
<rect x="786.44" y="388.06" width="4.55" height="10.24" fill="#8a3023"/>
<rect x="786.44" y="345.28" width="4.55" height="42.78" fill="#4566a1"/>
<rect x="786.44" y="340.69" width="4.55" height="4.58" fill="#15b861"/>
<rect x="792.86" y="388.33" width="4.55" height="9.97" fill="#8a3023"/>
<rect x="792.86" y="346.25" width="4.55" height="42.08" fill="#4566a1"/>
<rect x="792.86" y="343.75" width="4.55" height="2.50" fill="#15b861"/>
<rect x="799.27" y="394.58" width="4.55" height="3.72" fill="#8a3023"/>
<rect x="799.27" y="375.00" width="4.55" height="19.58" fill="#4566a1"/>
<rect x="799.27" y="374.17" width="4.55" height="0.83" fill="#15b861"/>
<rect x="805.68" y="394.17" width="4.55" height="4.13" fill="#8a3023"/>
<rect x="805.68" y="375.14" width="4.55" height="19.03" fill="#4566a1"/>
<rect x="805.68" y="373.89" width="4.55" height="1.25" fill="#15b861"/>
<rect x="812.10" y="392.50" width="4.55" height="5.80" fill="#8a3023"/>
<rect x="812.10" y="371.39" width="4.55" height="21.11" fill="#4566a1"/>
<rect x="812.10" y="370.00" width="4.55" height="1.39" fill="#15b861"/>
<rect x="818.51" y="391.11" width="4.55" height="7.19" fill="#8a3023"/>
<rect x="818.51" y="364.58" width="4.55" height="26.53" fill="#4566a1"/>
<rect x="818.51" y="360.14" width="4.55" height="4.44" fill="#15b861"/>
<rect x="824.92" y="390.00" width="4.55" height="8.30" fill="#8a3023"/>
<rect x="824.92" y="343.06" width="4.55" height="46.94" fill="#4566a1"/>
<rect x="824.92" y="338.75" width="4.55" height="4.31" fill="#15b861"/>
<rect x="831.34" y="390.00" width="4.55" height="8.30" fill="#8a3023"/>
<rect x="831.34" y="357.36" width="4.55" height="32.64" fill="#4566a1"/>
<rect x="831.34" y="348.89" width="4.55" height="8.47" fill="#15b861"/>
<rect x="837.75" y="391.81" width="4.55" height="6.49" fill="#8a3023"/>
<rect x="837.75" y="346.81" width="4.55" height="45.00" fill="#4566a1"/>
<rect x="837.75" y="337.08" width="4.55" height="9.72" fill="#15b861"/>
<rect x="844.16" y="390.97" width="4.55" height="7.33" fill="#8a3023"/>
<rect x="844.16" y="352.78" width="4.55" height="38.19" fill="#4566a1"/>
<rect x="844.16" y="344.17" width="4.55" height="8.61" fill="#15b861"/>
<rect x="850.58" y="398.06" width="4.55" height="0.24" fill="#8a3023"/>
<rect x="850.58" y="374.03" width="4.55" height="24.03" fill="#4566a1"/>
<rect x="850.58" y="371.94" width="4.55" height="2.08" fill="#15b861"/>
<rect x="856.99" y="396.94" width="4.55" height="1.36" fill="#8a3023"/>
<rect x="856.99" y="372.92" width="4.55" height="24.03" fill="#4566a1"/>
<rect x="856.99" y="371.94" width="4.55" height="0.97" fill="#15b861"/>
<rect x="863.40" y="396.94" width="4.55" height="1.36" fill="#8a3023"/>
<rect x="863.40" y="370.56" width="4.55" height="26.39" fill="#4566a1"/>
<rect x="863.40" y="368.89" width="4.55" height="1.67" fill="#15b861"/>
<rect x="869.82" y="394.17" width="4.55" height="4.13" fill="#8a3023"/>
<rect x="869.82" y="344.72" width="4.55" height="49.44" fill="#4566a1"/>
<rect x="869.82" y="339.31" width="4.55" height="5.42" fill="#15b861"/>
<rect x="876.23" y="395.83" width="4.55" height="2.47" fill="#8a3023"/>
<rect x="876.23" y="363.61" width="4.55" height="32.22" fill="#4566a1"/>
<rect x="876.23" y="361.94" width="4.55" height="1.67" fill="#15b861"/>
<rect x="882.64" y="395.83" width="4.55" height="2.47" fill="#8a3023"/>
<rect x="882.64" y="370.83" width="4.55" height="25.00" fill="#4566a1"/>
<rect x="882.64" y="368.89" width="4.55" height="1.94" fill="#15b861"/>
<rect x="889.06" y="396.94" width="4.55" height="1.36" fill="#8a3023"/>
<rect x="889.06" y="365.28" width="4.55" height="31.67" fill="#4566a1"/>
<rect x="889.06" y="363.89" width="4.55" height="1.39" fill="#15b861"/>
<rect x="895.47" y="396.53" width="4.55" height="1.77" fill="#8a3023"/>
<rect x="895.47" y="364.17" width="4.55" height="32.36" fill="#4566a1"/>
<rect x="895.47" y="362.22" width="4.55" height="1.94" fill="#15b861"/>
<rect x="901.88" y="395.56" width="4.55" height="2.74" fill="#8a3023"/>
<rect x="901.88" y="355.28" width="4.55" height="40.28" fill="#4566a1"/>
<rect x="901.88" y="352.78" width="4.55" height="2.50" fill="#15b861"/>
<rect x="908.30" y="395.83" width="4.55" height="2.47" fill="#8a3023"/>
<rect x="908.30" y="361.94" width="4.55" height="33.89" fill="#4566a1"/>
<rect x="908.30" y="357.92" width="4.55" height="4.03" fill="#15b861"/>
<rect x="914.71" y="396.11" width="4.55" height="2.19" fill="#8a3023"/>
<rect x="914.71" y="358.75" width="4.55" height="37.36" fill="#4566a1"/>
<rect x="914.71" y="357.92" width="4.55" height="0.83" fill="#15b861"/>
<rect x="921.12" y="395.28" width="4.55" height="3.02" fill="#8a3023"/>
<rect x="921.12" y="352.36" width="4.55" height="42.92" fill="#4566a1"/>
<rect x="921.12" y="345.28" width="4.55" height="7.08" fill="#15b861"/>
<rect x="927.54" y="395.28" width="4.55" height="3.02" fill="#8a3023"/>
<rect x="927.54" y="356.94" width="4.55" height="38.33" fill="#4566a1"/>
<rect x="927.54" y="354.58" width="4.55" height="2.36" fill="#15b861"/>
<rect x="933.95" y="396.94" width="4.55" height="1.36" fill="#8a3023"/>
<rect x="933.95" y="359.03" width="4.55" height="37.92" fill="#4566a1"/>
<rect x="933.95" y="358.06" width="4.55" height="0.97" fill="#15b861"/>
<rect x="940.36" y="396.94" width="4.55" height="1.36" fill="#8a3023"/>
<rect x="940.36" y="359.17" width="4.55" height="37.78" fill="#4566a1"/>
<rect x="940.36" y="358.06" width="4.55" height="1.11" fill="#15b861"/>
<rect x="946.78" y="395.28" width="4.55" height="3.02" fill="#8a3023"/>
<rect x="946.78" y="358.33" width="4.55" height="36.94" fill="#4566a1"/>
<rect x="946.78" y="355.00" width="4.55" height="3.33" fill="#15b861"/>
<rect x="953.19" y="395.14" width="4.55" height="3.16" fill="#8a3023"/>
<rect x="953.19" y="353.47" width="4.55" height="41.67" fill="#4566a1"/>
<rect x="953.19" y="346.11" width="4.55" height="7.36" fill="#15b861"/>
<rect x="959.60" y="397.22" width="4.55" height="1.08" fill="#8a3023"/>
<rect x="959.60" y="358.33" width="4.55" height="38.89" fill="#4566a1"/>
<rect x="959.60" y="356.67" width="4.55" height="1.67" fill="#15b861"/>
<rect x="966.02" y="393.33" width="4.55" height="4.97" fill="#8a3023"/>
<rect x="966.02" y="355.00" width="4.55" height="38.33" fill="#4566a1"/>
<rect x="966.02" y="352.78" width="4.55" height="2.22" fill="#15b861"/>
<rect x="972.43" y="395.28" width="4.55" height="3.02" fill="#8a3023"/>
<rect x="972.43" y="361.67" width="4.55" height="33.61" fill="#4566a1"/>
<rect x="972.43" y="359.17" width="4.55" height="2.50" fill="#15b861"/>
<rect x="978.84" y="396.67" width="4.55" height="1.63" fill="#8a3023"/>
<rect x="978.84" y="361.94" width="4.55" height="34.72" fill="#4566a1"/>
<rect x="978.84" y="360.69" width="4.55" height="1.25" fill="#15b861"/>
<rect x="985.26" y="396.94" width="4.55" height="1.36" fill="#8a3023"/>
<rect x="985.26" y="352.36" width="4.55" height="44.58" fill="#4566a1"/>
<rect x="985.26" y="347.78" width="4.55" height="4.58" fill="#15b861"/>
<rect x="991.67" y="396.53" width="4.55" height="1.77" fill="#8a3023"/>
<rect x="991.67" y="360.28" width="4.55" height="36.25" fill="#4566a1"/>
<rect x="991.67" y="358.06" width="4.55" height="2.22" fill="#15b861"/>
<rect x="998.08" y="395.28" width="4.55" height="3.02" fill="#8a3023"/>
<rect x="998.08" y="353.06" width="4.55" height="42.22" fill="#4566a1"/>
<rect x="998.08" y="350.28" width="4.55" height="2.78" fill="#15b861"/>
<rect x="1004.50" y="396.94" width="4.55" height="1.36" fill="#8a3023"/>
<rect x="1004.50" y="357.36" width="4.55" height="39.58" fill="#4566a1"/>
<rect x="1004.50" y="355.83" width="4.55" height="1.53" fill="#15b861"/>
<rect x="1010.91" y="396.94" width="4.55" height="1.36" fill="#8a3023"/>
<rect x="1010.91" y="358.06" width="4.55" height="38.89" fill="#4566a1"/>
<rect x="1010.91" y="356.94" width="4.55" height="1.11" fill="#15b861"/>
<rect x="1017.32" y="396.94" width="4.55" height="1.36" fill="#8a3023"/>
<rect x="1017.32" y="365.83" width="4.55" height="31.11" fill="#4566a1"/>
<rect x="1017.32" y="362.78" width="4.55" height="3.06" fill="#15b861"/>
<rect x="1023.74" y="396.94" width="4.55" height="1.36" fill="#8a3023"/>
<rect x="1023.74" y="355.56" width="4.55" height="41.39" fill="#4566a1"/>
<rect x="1023.74" y="352.50" width="4.55" height="3.06" fill="#15b861"/>
<rect x="1030.15" y="397.22" width="4.55" height="1.08" fill="#8a3023"/>
<rect x="1030.15" y="357.36" width="4.55" height="39.86" fill="#4566a1"/>
<rect x="1030.15" y="355.97" width="4.55" height="1.39" fill="#15b861"/>
<rect x="1036.56" y="398.06" width="4.55" height="0.24" fill="#8a3023"/>
<rect x="1036.56" y="359.31" width="4.55" height="38.75" fill="#4566a1"/>
<rect x="1036.56" y="356.67" width="4.55" height="2.64" fill="#15b861"/>
<rect x="1042.98" y="396.94" width="4.55" height="1.36" fill="#8a3023"/>
<rect x="1042.98" y="351.67" width="4.55" height="45.28" fill="#4566a1"/>
<rect x="1042.98" y="347.22" width="4.55" height="4.44" fill="#15b861"/>
<rect x="1049.39" y="395.28" width="4.55" height="3.02" fill="#8a3023"/>
<rect x="1049.39" y="356.11" width="4.55" height="39.17" fill="#4566a1"/>
<rect x="1049.39" y="352.78" width="4.55" height="3.33" fill="#15b861"/>
<rect x="1055.80" y="396.53" width="4.55" height="1.77" fill="#8a3023"/>
<rect x="1055.80" y="362.36" width="4.55" height="34.17" fill="#4566a1"/>
<rect x="1055.80" y="359.31" width="4.55" height="3.06" fill="#15b861"/>
<rect x="1062.22" y="395.83" width="4.55" height="2.47" fill="#8a3023"/>
<rect x="1062.22" y="376.39" width="4.55" height="19.44" fill="#4566a1"/>
<rect x="1062.22" y="375.00" width="4.55" height="1.39" fill="#15b861"/>
<rect x="1068.63" y="395.28" width="4.55" height="3.02" fill="#8a3023"/>
<rect x="1068.63" y="362.78" width="4.55" height="32.50" fill="#4566a1"/>
<rect x="1068.63" y="357.22" width="4.55" height="5.56" fill="#15b861"/>
<rect x="1075.04" y="396.53" width="4.55" height="1.77" fill="#8a3023"/>
<rect x="1075.04" y="358.33" width="4.55" height="38.19" fill="#4566a1"/>
<rect x="1075.04" y="356.25" width="4.55" height="2.08" fill="#15b861"/>
<rect x="1081.46" y="397.00" width="4.55" height="1.30" fill="#8a3023"/>
<rect x="1081.46" y="363.83" width="4.55" height="33.17" fill="#4566a1"/>
<rect x="1081.46" y="361.33" width="4.55" height="2.50" fill="#15b861"/>
<rect x="1087.87" y="396.00" width="4.55" height="2.30" fill="#8a3023"/>
<rect x="1087.87" y="361.83" width="4.55" height="34.17" fill="#4566a1"/>
<rect x="1087.87" y="360.00" width="4.55" height="1.83" fill="#15b861"/>
<rect x="1094.28" y="397.33" width="4.55" height="0.97" fill="#8a3023"/>
<rect x="1094.28" y="365.00" width="4.55" height="32.33" fill="#4566a1"/>
<rect x="1094.28" y="364.50" width="4.55" height="0.50" fill="#15b861"/>
<rect x="1100.70" y="396.33" width="4.55" height="1.97" fill="#8a3023"/>
<rect x="1100.70" y="357.50" width="4.55" height="38.83" fill="#4566a1"/>
<rect x="1100.70" y="354.33" width="4.55" height="3.17" fill="#15b861"/>
<rect x="1107.11" y="396.00" width="4.55" height="2.30" fill="#8a3023"/>
<rect x="1107.11" y="361.17" width="4.55" height="34.83" fill="#4566a1"/>
<rect x="1107.11" y="358.33" width="4.55" height="2.83" fill="#15b861"/>
<rect x="1113.52" y="398.00" width="4.55" height="0.30" fill="#8a3023"/>
<rect x="1113.52" y="376.33" width="4.55" height="21.67" fill="#4566a1"/>
<rect x="1113.52" y="374.67" width="4.55" height="1.67" fill="#15b861"/>
<rect x="1119.94" y="397.00" width="4.55" height="1.30" fill="#8a3023"/>
<rect x="1119.94" y="372.00" width="4.55" height="25.00" fill="#4566a1"/>
<rect x="1119.94" y="367.00" width="4.55" height="5.00" fill="#15b861"/>
<rect x="1126.35" y="394.17" width="4.55" height="4.13" fill="#8a3023"/>
<rect x="1126.35" y="349.00" width="4.55" height="45.17" fill="#4566a1"/>
<rect x="1126.35" y="340.83" width="4.55" height="8.17" fill="#15b861"/>
<rect x="1132.76" y="394.17" width="4.55" height="4.13" fill="#8a3023"/>
<rect x="1132.76" y="352.33" width="4.55" height="41.83" fill="#4566a1"/>
<rect x="1132.76" y="300.33" width="4.55" height="52.00" fill="#15b861"/>
<rect x="1139.18" y="394.17" width="4.55" height="4.13" fill="#8a3023"/>
<rect x="1139.18" y="354.00" width="4.55" height="40.17" fill="#4566a1"/>
<rect x="1139.18" y="350.17" width="4.55" height="3.83" fill="#15b861"/>
<rect x="1145.59" y="396.00" width="4.55" height="2.30" fill="#8a3023"/>
<rect x="1145.59" y="358.83" width="4.55" height="37.17" fill="#4566a1"/>
<rect x="1145.59" y="357.83" width="4.55" height="1.00" fill="#15b861"/>
<rect x="1152.00" y="394.17" width="4.55" height="4.13" fill="#8a3023"/>
<rect x="1152.00" y="353.50" width="4.55" height="40.67" fill="#4566a1"/>
<rect x="1152.00" y="351.17" width="4.55" height="2.33" fill="#15b861"/>
<rect x="1158.42" y="394.67" width="4.55" height="3.63" fill="#8a3023"/>
<rect x="1158.42" y="359.00" width="4.55" height="35.67" fill="#4566a1"/>
<rect x="1158.42" y="356.83" width="4.55" height="2.17" fill="#15b861"/>
<rect x="1164.83" y="396.33" width="4.55" height="1.97" fill="#8a3023"/>
<rect x="1164.83" y="362.00" width="4.55" height="34.33" fill="#4566a1"/>
<rect x="1164.83" y="361.00" width="4.55" height="1.00" fill="#15b861"/>
<rect x="1171.24" y="397.00" width="4.55" height="1.30" fill="#8a3023"/>
<rect x="1171.24" y="357.33" width="4.55" height="39.67" fill="#4566a1"/>
<rect x="1171.24" y="355.67" width="4.55" height="1.67" fill="#15b861"/>
<rect x="1177.66" y="395.33" width="4.55" height="2.97" fill="#8a3023"/>
<rect x="1177.66" y="361.00" width="4.55" height="34.33" fill="#4566a1"/>
<rect x="1177.66" y="359.00" width="4.55" height="2.00" fill="#15b861"/>
<rect x="1184.07" y="394.17" width="4.55" height="4.13" fill="#8a3023"/>
<rect x="1184.07" y="352.17" width="4.55" height="42.00" fill="#4566a1"/>
<rect x="1184.07" y="346.00" width="4.55" height="6.17" fill="#15b861"/>
<rect x="1190.48" y="395.33" width="4.55" height="2.97" fill="#8a3023"/>
<rect x="1190.48" y="356.67" width="4.55" height="38.67" fill="#4566a1"/>
<rect x="1190.48" y="353.00" width="4.55" height="3.67" fill="#15b861"/>
<rect x="1196.90" y="393.00" width="4.55" height="5.30" fill="#8a3023"/>
<rect x="1196.90" y="349.00" width="4.55" height="44.00" fill="#4566a1"/>
<rect x="1196.90" y="346.00" width="4.55" height="3.00" fill="#15b861"/>
<rect x="1203.31" y="395.33" width="4.55" height="2.97" fill="#8a3023"/>
<rect x="1203.31" y="356.17" width="4.55" height="39.17" fill="#4566a1"/>
<rect x="1203.31" y="354.17" width="4.55" height="2.00" fill="#15b861"/>
<rect x="1209.72" y="396.00" width="4.55" height="2.30" fill="#8a3023"/>
<rect x="1209.72" y="358.83" width="4.55" height="37.17" fill="#4566a1"/>
<rect x="1209.72" y="357.00" width="4.55" height="1.83" fill="#15b861"/>
<rect x="1216.14" y="393.33" width="4.55" height="4.97" fill="#8a3023"/>
<rect x="1216.14" y="353.00" width="4.55" height="40.33" fill="#4566a1"/>
<rect x="1216.14" y="348.17" width="4.55" height="4.83" fill="#15b861"/>
<rect x="1222.55" y="394.17" width="4.55" height="4.13" fill="#8a3023"/>
<rect x="1222.55" y="376.33" width="4.55" height="17.83" fill="#4566a1"/>
<rect x="1222.55" y="367.67" width="4.55" height="8.67" fill="#15b861"/>
<rect x="1228.96" y="391.00" width="4.55" height="7.30" fill="#8a3023"/>
<rect x="1228.96" y="369.17" width="4.55" height="21.83" fill="#4566a1"/>
<rect x="1228.96" y="348.83" width="4.55" height="20.33" fill="#15b861"/>
<rect x="1235.38" y="398.00" width="2.62" height="0.30" fill="#8a3023"/>
<rect x="1235.38" y="385.33" width="2.62" height="12.67" fill="#4566a1"/>
<rect x="1235.38" y="375.83" width="2.62" height="9.50" fill="#15b861"/>
<line x1="306" y1="520.5" x2="1238" y2="520.5" class="gl"/>
<text x="303" y="524.8" class="yl">1,200</text>
<line x1="306" y1="543.5" x2="1238" y2="543.5" class="gl"/>
<text x="303" y="547.8" class="yl">1,000</text>
<line x1="306" y1="567.5" x2="1238" y2="567.5" class="gl"/>
<text x="303" y="571.8" class="yl">800</text>
<line x1="306" y1="590.5" x2="1238" y2="590.5" class="gl"/>
<text x="303" y="594.8" class="yl">600</text>
<line x1="306" y1="614.5" x2="1238" y2="614.5" class="gl"/>
<text x="303" y="618.8" class="yl">400</text>
<line x1="306" y1="638.5" x2="1238" y2="638.5" class="gl"/>
<text x="303" y="642.8" class="yl">200</text>
<line x1="306" y1="661.5" x2="1238" y2="661.5" class="gl"/>
<text x="303" y="665.8" class="yl">0</text>
<line x1="330.5" y1="520" x2="330.5" y2="669" class="gl"/>
<text x="330.6" y="683" class="xl">10:00</text>
<line x1="368.5" y1="520" x2="368.5" y2="669" class="gl"/>
<text x="369.1" y="683" class="xl">11:00</text>
<line x1="407.5" y1="520" x2="407.5" y2="669" class="gl"/>
<text x="407.6" y="683" class="xl">12:00</text>
<line x1="445.5" y1="520" x2="445.5" y2="669" class="gl"/>
<text x="446.0" y="683" class="xl">13:00</text>
<line x1="484.5" y1="520" x2="484.5" y2="669" class="gl"/>
<text x="484.5" y="683" class="xl">14:00</text>
<line x1="522.5" y1="520" x2="522.5" y2="669" class="gl"/>
<text x="523.0" y="683" class="xl">15:00</text>
<line x1="561.5" y1="520" x2="561.5" y2="669" class="gl"/>
<text x="561.5" y="683" class="xl">16:00</text>
<line x1="599.5" y1="520" x2="599.5" y2="669" class="gl"/>
<text x="600.0" y="683" class="xl">17:00</text>
<line x1="638.5" y1="520" x2="638.5" y2="669" class="gl"/>
<text x="638.4" y="683" class="xl">18:00</text>
<line x1="676.5" y1="520" x2="676.5" y2="669" class="gl"/>
<text x="676.9" y="683" class="xl">19:00</text>
<line x1="715.5" y1="520" x2="715.5" y2="669" class="gl"/>
<text x="715.4" y="683" class="xl">20:00</text>
<line x1="753.5" y1="520" x2="753.5" y2="669" class="gl"/>
<text x="753.9" y="683" class="xl">21:00</text>
<line x1="792.5" y1="520" x2="792.5" y2="669" class="gl"/>
<text x="792.4" y="683" class="xl">22:00</text>
<line x1="830.5" y1="520" x2="830.5" y2="669" class="gl"/>
<text x="830.8" y="683" class="xl">23:00</text>
<line x1="869.5" y1="520" x2="869.5" y2="669" class="gl"/>
<text x="869.3" y="683" class="xl">00:00</text>
<line x1="907.5" y1="520" x2="907.5" y2="669" class="gl"/>
<text x="907.8" y="683" class="xl">01:00</text>
<line x1="946.5" y1="520" x2="946.5" y2="669" class="gl"/>
<text x="946.3" y="683" class="xl">02:00</text>
<line x1="984.5" y1="520" x2="984.5" y2="669" class="gl"/>
<text x="984.8" y="683" class="xl">03:00</text>
<line x1="1023.5" y1="520" x2="1023.5" y2="669" class="gl"/>
<text x="1023.2" y="683" class="xl">04:00</text>
<line x1="1061.5" y1="520" x2="1061.5" y2="669" class="gl"/>
<text x="1061.7" y="683" class="xl">05:00</text>
<line x1="1100.5" y1="520" x2="1100.5" y2="669" class="gl"/>
<text x="1100.2" y="683" class="xl">06:00</text>
<line x1="1138.5" y1="520" x2="1138.5" y2="669" class="gl"/>
<text x="1138.7" y="683" class="xl">07:00</text>
<line x1="1177.5" y1="520" x2="1177.5" y2="669" class="gl"/>
<text x="1177.2" y="683" class="xl">08:00</text>
<line x1="1215.5" y1="520" x2="1215.5" y2="669" class="gl"/>
<text x="1215.6" y="683" class="xl">09:00</text>
<rect x="313.90" y="640.17" width="2.50" height="21.13" fill="#f56954"/>
<rect x="313.90" y="615.00" width="2.50" height="25.17" fill="#3c8dbc"/>
<rect x="313.90" y="613.00" width="2.50" height="2.00" fill="#00c0ef"/>
<rect x="318.27" y="628.83" width="4.55" height="32.47" fill="#f56954"/>
<rect x="318.27" y="602.50" width="4.55" height="26.33" fill="#3c8dbc"/>
<rect x="318.27" y="600.00" width="4.55" height="2.50" fill="#00c0ef"/>
<rect x="318.27" y="597.33" width="4.55" height="2.67" fill="#f39c12"/>
<rect x="318.27" y="596.33" width="4.55" height="1.00" fill="#00a65a"/>
<rect x="324.69" y="628.33" width="4.55" height="32.97" fill="#f56954"/>
<rect x="324.69" y="622.17" width="4.55" height="6.17" fill="#3c8dbc"/>
<rect x="324.69" y="619.17" width="4.55" height="3.00" fill="#00c0ef"/>
<rect x="324.69" y="615.50" width="4.55" height="3.67" fill="#f39c12"/>
<rect x="324.69" y="614.33" width="4.55" height="1.17" fill="#00a65a"/>
<rect x="331.10" y="625.17" width="4.55" height="36.13" fill="#f56954"/>
<rect x="331.10" y="622.67" width="4.55" height="2.50" fill="#00c0ef"/>
<rect x="331.10" y="620.17" width="4.55" height="2.50" fill="#f39c12"/>
<rect x="331.10" y="619.17" width="4.55" height="1.00" fill="#00a65a"/>
<rect x="337.51" y="627.83" width="4.55" height="33.47" fill="#f56954"/>
<rect x="337.51" y="625.17" width="4.55" height="2.67" fill="#00c0ef"/>
<rect x="337.51" y="624.17" width="4.55" height="1.00" fill="#00a65a"/>
<rect x="343.93" y="632.17" width="4.55" height="29.13" fill="#f56954"/>
<rect x="343.93" y="629.67" width="4.55" height="2.50" fill="#3c8dbc"/>
<rect x="343.93" y="628.33" width="4.55" height="1.33" fill="#00c0ef"/>
<rect x="350.34" y="634.33" width="4.55" height="26.97" fill="#f56954"/>
<rect x="350.34" y="631.00" width="4.55" height="3.33" fill="#3c8dbc"/>
<rect x="350.34" y="629.00" width="4.55" height="2.00" fill="#00c0ef"/>
<rect x="350.34" y="627.67" width="4.55" height="1.33" fill="#00a65a"/>
<rect x="356.75" y="634.17" width="4.55" height="27.13" fill="#f56954"/>
<rect x="356.75" y="619.33" width="4.55" height="14.83" fill="#3c8dbc"/>
<rect x="356.75" y="618.00" width="4.55" height="1.33" fill="#00c0ef"/>
<rect x="356.75" y="616.67" width="4.55" height="1.33" fill="#00a65a"/>
<rect x="363.17" y="630.83" width="4.55" height="30.47" fill="#f56954"/>
<rect x="363.17" y="616.00" width="4.55" height="14.83" fill="#3c8dbc"/>
<rect x="363.17" y="613.00" width="4.55" height="3.00" fill="#00c0ef"/>
<rect x="363.17" y="603.33" width="4.55" height="9.67" fill="#f39c12"/>
<rect x="363.17" y="603.00" width="4.55" height="0.33" fill="#00a65a"/>
<rect x="369.58" y="639.67" width="4.55" height="21.63" fill="#f56954"/>
<rect x="369.58" y="635.00" width="4.55" height="4.67" fill="#3c8dbc"/>
<rect x="369.58" y="632.50" width="4.55" height="2.50" fill="#00c0ef"/>
<rect x="369.58" y="620.83" width="4.55" height="11.67" fill="#f39c12"/>
<rect x="369.58" y="620.17" width="4.55" height="0.67" fill="#00a65a"/>
<rect x="375.99" y="630.17" width="4.55" height="31.13" fill="#f56954"/>
<rect x="375.99" y="613.17" width="4.55" height="17.00" fill="#3c8dbc"/>
<rect x="375.99" y="610.67" width="4.55" height="2.50" fill="#00c0ef"/>
<rect x="375.99" y="604.67" width="4.55" height="6.00" fill="#f39c12"/>
<rect x="375.99" y="603.83" width="4.55" height="0.83" fill="#00a65a"/>
<rect x="382.41" y="628.33" width="4.55" height="32.97" fill="#f56954"/>
<rect x="382.41" y="620.50" width="4.55" height="7.83" fill="#3c8dbc"/>
<rect x="382.41" y="618.00" width="4.55" height="2.50" fill="#00c0ef"/>
<rect x="382.41" y="616.33" width="4.55" height="1.67" fill="#f39c12"/>
<rect x="382.41" y="614.67" width="4.55" height="1.67" fill="#00a65a"/>
<rect x="388.82" y="625.00" width="4.55" height="36.30" fill="#f56954"/>
<rect x="388.82" y="614.33" width="4.55" height="10.67" fill="#3c8dbc"/>
<rect x="388.82" y="610.83" width="4.55" height="3.50" fill="#00c0ef"/>
<rect x="388.82" y="609.67" width="4.55" height="1.17" fill="#f39c12"/>
<rect x="388.82" y="609.33" width="4.55" height="0.33" fill="#00a65a"/>
<rect x="395.23" y="629.00" width="4.55" height="32.30" fill="#f56954"/>
<rect x="395.23" y="607.33" width="4.55" height="21.67" fill="#3c8dbc"/>
<rect x="395.23" y="604.67" width="4.55" height="2.67" fill="#00c0ef"/>
<rect x="395.23" y="601.33" width="4.55" height="3.33" fill="#f39c12"/>
<rect x="395.23" y="600.17" width="4.55" height="1.17" fill="#00a65a"/>
<rect x="401.65" y="626.67" width="4.55" height="34.63" fill="#f56954"/>
<rect x="401.65" y="613.00" width="4.55" height="13.67" fill="#3c8dbc"/>
<rect x="401.65" y="610.17" width="4.55" height="2.83" fill="#00c0ef"/>
<rect x="401.65" y="604.67" width="4.55" height="5.50" fill="#f39c12"/>
<rect x="401.65" y="604.00" width="4.55" height="0.67" fill="#00a65a"/>
<rect x="408.06" y="625.50" width="4.55" height="35.80" fill="#f56954"/>
<rect x="408.06" y="608.00" width="4.55" height="17.50" fill="#3c8dbc"/>
<rect x="408.06" y="605.83" width="4.55" height="2.17" fill="#00c0ef"/>
<rect x="408.06" y="600.50" width="4.55" height="5.33" fill="#f39c12"/>
<rect x="408.06" y="598.00" width="4.55" height="2.50" fill="#00a65a"/>
<rect x="414.47" y="630.17" width="4.55" height="31.13" fill="#f56954"/>
<rect x="414.47" y="601.33" width="4.55" height="28.83" fill="#3c8dbc"/>
<rect x="414.47" y="598.83" width="4.55" height="2.50" fill="#00c0ef"/>
<rect x="414.47" y="596.33" width="4.55" height="2.50" fill="#f39c12"/>
<rect x="414.47" y="557.17" width="4.55" height="39.17" fill="#0073b7"/>
<rect x="420.89" y="624.67" width="4.55" height="36.63" fill="#f56954"/>
<rect x="420.89" y="589.67" width="4.55" height="35.00" fill="#3c8dbc"/>
<rect x="420.89" y="587.17" width="4.55" height="2.50" fill="#00c0ef"/>
<rect x="420.89" y="584.67" width="4.55" height="2.50" fill="#f39c12"/>
<rect x="420.89" y="582.17" width="4.55" height="2.50" fill="#0073b7"/>
<rect x="427.30" y="636.50" width="4.55" height="24.80" fill="#f56954"/>
<rect x="427.30" y="621.00" width="4.55" height="15.50" fill="#3c8dbc"/>
<rect x="427.30" y="614.33" width="4.55" height="6.67" fill="#00c0ef"/>
<rect x="427.30" y="609.00" width="4.55" height="5.33" fill="#0073b7"/>
<rect x="433.71" y="630.00" width="4.55" height="31.30" fill="#f56954"/>
<rect x="433.71" y="619.67" width="4.55" height="10.33" fill="#3c8dbc"/>
<rect x="433.71" y="615.00" width="4.55" height="4.67" fill="#00c0ef"/>
<rect x="433.71" y="612.17" width="4.55" height="2.83" fill="#f39c12"/>
<rect x="433.71" y="611.00" width="4.55" height="1.17" fill="#00a65a"/>
<rect x="440.13" y="629.00" width="4.55" height="32.30" fill="#f56954"/>
<rect x="440.13" y="593.83" width="4.55" height="35.17" fill="#3c8dbc"/>
<rect x="440.13" y="586.33" width="4.55" height="7.50" fill="#00c0ef"/>
<rect x="440.13" y="584.67" width="4.55" height="1.67" fill="#f39c12"/>
<rect x="440.13" y="584.33" width="4.55" height="0.33" fill="#00a65a"/>
<rect x="446.54" y="629.33" width="4.55" height="31.97" fill="#f56954"/>
<rect x="446.54" y="619.33" width="4.55" height="10.00" fill="#3c8dbc"/>
<rect x="446.54" y="615.00" width="4.55" height="4.33" fill="#00c0ef"/>
<rect x="446.54" y="613.83" width="4.55" height="1.17" fill="#f39c12"/>
<rect x="446.54" y="611.83" width="4.55" height="2.00" fill="#00a65a"/>
<rect x="452.95" y="627.17" width="4.55" height="34.13" fill="#f56954"/>
<rect x="452.95" y="611.00" width="4.55" height="16.17" fill="#3c8dbc"/>
<rect x="452.95" y="602.17" width="4.55" height="8.83" fill="#00c0ef"/>
<rect x="452.95" y="601.33" width="4.55" height="0.83" fill="#001f3f"/>
<rect x="452.95" y="600.00" width="4.55" height="1.33" fill="#00c0ef"/>
<rect x="459.37" y="643.83" width="4.55" height="17.47" fill="#f56954"/>
<rect x="459.37" y="632.17" width="4.55" height="11.67" fill="#3c8dbc"/>
<rect x="459.37" y="628.83" width="4.55" height="3.33" fill="#00c0ef"/>
<rect x="465.78" y="628.00" width="4.55" height="33.30" fill="#f56954"/>
<rect x="465.78" y="617.50" width="4.55" height="10.50" fill="#3c8dbc"/>
<rect x="465.78" y="613.50" width="4.55" height="4.00" fill="#00c0ef"/>
<rect x="465.78" y="612.17" width="4.55" height="1.33" fill="#f39c12"/>
<rect x="465.78" y="611.67" width="4.55" height="0.50" fill="#00a65a"/>
<rect x="472.19" y="630.00" width="4.55" height="31.30" fill="#f56954"/>
<rect x="472.19" y="614.33" width="4.55" height="15.67" fill="#3c8dbc"/>
<rect x="472.19" y="609.67" width="4.55" height="4.67" fill="#00c0ef"/>
<rect x="472.19" y="608.00" width="4.55" height="1.67" fill="#f39c12"/>
<rect x="472.19" y="607.17" width="4.55" height="0.83" fill="#00a65a"/>
<rect x="478.61" y="635.50" width="4.55" height="25.80" fill="#f56954"/>
<rect x="478.61" y="612.17" width="4.55" height="23.33" fill="#3c8dbc"/>
<rect x="478.61" y="610.00" width="4.55" height="2.17" fill="#00c0ef"/>
<rect x="478.61" y="609.00" width="4.55" height="1.00" fill="#f39c12"/>
<rect x="478.61" y="608.33" width="4.55" height="0.67" fill="#00a65a"/>
<rect x="485.02" y="626.00" width="4.55" height="35.30" fill="#f56954"/>
<rect x="485.02" y="607.67" width="4.55" height="18.33" fill="#3c8dbc"/>
<rect x="485.02" y="604.67" width="4.55" height="3.00" fill="#00c0ef"/>
<rect x="485.02" y="603.00" width="4.55" height="1.67" fill="#f39c12"/>
<rect x="485.02" y="600.00" width="4.55" height="3.00" fill="#00a65a"/>
<rect x="491.43" y="625.83" width="4.55" height="35.47" fill="#f56954"/>
<rect x="491.43" y="616.00" width="4.55" height="9.83" fill="#3c8dbc"/>
<rect x="491.43" y="613.00" width="4.55" height="3.00" fill="#00c0ef"/>
<rect x="491.43" y="612.17" width="4.55" height="0.83" fill="#00a65a"/>
<rect x="497.85" y="625.83" width="4.55" height="35.47" fill="#f56954"/>
<rect x="497.85" y="621.00" width="4.55" height="4.83" fill="#3c8dbc"/>
<rect x="497.85" y="618.33" width="4.55" height="2.67" fill="#00c0ef"/>
<rect x="497.85" y="618.00" width="4.55" height="0.33" fill="#00a65a"/>
<rect x="504.26" y="626.83" width="4.55" height="34.47" fill="#f56954"/>
<rect x="504.26" y="623.17" width="4.55" height="3.67" fill="#3c8dbc"/>
<rect x="504.26" y="621.33" width="4.55" height="1.83" fill="#00c0ef"/>
<rect x="504.26" y="620.50" width="4.55" height="0.83" fill="#00a65a"/>
<rect x="510.67" y="633.83" width="4.55" height="27.47" fill="#f56954"/>
<rect x="510.67" y="629.33" width="4.55" height="4.50" fill="#3c8dbc"/>
<rect x="510.67" y="626.33" width="4.55" height="3.00" fill="#00c0ef"/>
<rect x="510.67" y="624.67" width="4.55" height="1.67" fill="#f39c12"/>
<rect x="510.67" y="624.00" width="4.55" height="0.67" fill="#00a65a"/>
<rect x="517.09" y="640.83" width="4.55" height="20.47" fill="#f56954"/>
<rect x="517.09" y="638.00" width="4.55" height="2.83" fill="#3c8dbc"/>
<rect x="517.09" y="635.50" width="4.55" height="2.50" fill="#00c0ef"/>
<rect x="517.09" y="634.67" width="4.55" height="0.83" fill="#00a65a"/>
<rect x="523.50" y="627.50" width="4.55" height="33.80" fill="#f56954"/>
<rect x="523.50" y="619.33" width="4.55" height="8.17" fill="#3c8dbc"/>
<rect x="523.50" y="616.83" width="4.55" height="2.50" fill="#00c0ef"/>
<rect x="523.50" y="613.00" width="4.55" height="3.83" fill="#f39c12"/>
<rect x="523.50" y="610.83" width="4.55" height="2.17" fill="#00a65a"/>
<rect x="529.91" y="626.83" width="4.55" height="34.47" fill="#f56954"/>
<rect x="529.91" y="618.00" width="4.55" height="8.83" fill="#3c8dbc"/>
<rect x="529.91" y="615.83" width="4.55" height="2.17" fill="#00c0ef"/>
<rect x="529.91" y="614.67" width="4.55" height="1.17" fill="#f39c12"/>
<rect x="529.91" y="613.83" width="4.55" height="0.83" fill="#00a65a"/>
<rect x="536.33" y="625.50" width="4.55" height="35.80" fill="#f56954"/>
<rect x="536.33" y="618.00" width="4.55" height="7.50" fill="#3c8dbc"/>
<rect x="536.33" y="615.00" width="4.55" height="3.00" fill="#00c0ef"/>
<rect x="536.33" y="613.83" width="4.55" height="1.17" fill="#f39c12"/>
<rect x="536.33" y="612.17" width="4.55" height="1.67" fill="#00a65a"/>
<rect x="542.74" y="628.33" width="4.55" height="32.97" fill="#f56954"/>
<rect x="542.74" y="619.33" width="4.55" height="9.00" fill="#3c8dbc"/>
<rect x="542.74" y="616.83" width="4.55" height="2.50" fill="#00c0ef"/>
<rect x="542.74" y="615.83" width="4.55" height="1.00" fill="#f39c12"/>
<rect x="549.15" y="626.00" width="4.55" height="35.30" fill="#f56954"/>
<rect x="549.15" y="617.17" width="4.55" height="8.83" fill="#3c8dbc"/>
<rect x="549.15" y="614.67" width="4.55" height="2.50" fill="#00c0ef"/>
<rect x="549.15" y="609.33" width="4.55" height="5.33" fill="#f39c12"/>
<rect x="549.15" y="608.33" width="4.55" height="1.00" fill="#00a65a"/>
<rect x="555.57" y="628.00" width="4.55" height="33.30" fill="#f56954"/>
<rect x="555.57" y="621.33" width="4.55" height="6.67" fill="#3c8dbc"/>
<rect x="555.57" y="619.33" width="4.55" height="2.00" fill="#00c0ef"/>
<rect x="555.57" y="618.00" width="4.55" height="1.33" fill="#00a65a"/>
<rect x="561.98" y="632.17" width="4.55" height="29.13" fill="#f56954"/>
<rect x="561.98" y="612.17" width="4.55" height="20.00" fill="#3c8dbc"/>
<rect x="561.98" y="609.67" width="4.55" height="2.50" fill="#00c0ef"/>
<rect x="561.98" y="608.00" width="4.55" height="1.67" fill="#f39c12"/>
<rect x="561.98" y="606.67" width="4.55" height="1.33" fill="#00a65a"/>
<rect x="568.39" y="631.83" width="4.55" height="29.47" fill="#f56954"/>
<rect x="568.39" y="612.17" width="4.55" height="19.67" fill="#3c8dbc"/>
<rect x="568.39" y="610.17" width="4.55" height="2.00" fill="#00c0ef"/>
<rect x="568.39" y="607.17" width="4.55" height="3.00" fill="#f39c12"/>
<rect x="568.39" y="606.67" width="4.55" height="0.50" fill="#00a65a"/>
<rect x="574.81" y="625.00" width="4.55" height="36.30" fill="#f56954"/>
<rect x="574.81" y="602.17" width="4.55" height="22.83" fill="#3c8dbc"/>
<rect x="574.81" y="588.83" width="4.55" height="13.33" fill="#00c0ef"/>
<rect x="574.81" y="587.67" width="4.55" height="1.17" fill="#f39c12"/>
<rect x="574.81" y="587.17" width="4.55" height="0.50" fill="#00a65a"/>
<rect x="581.22" y="643.50" width="4.55" height="17.80" fill="#f56954"/>
<rect x="581.22" y="634.33" width="4.55" height="9.17" fill="#3c8dbc"/>
<rect x="581.22" y="621.67" width="4.55" height="12.67" fill="#00c0ef"/>
<rect x="581.22" y="620.50" width="4.55" height="1.17" fill="#f39c12"/>
<rect x="581.22" y="620.17" width="4.55" height="0.33" fill="#00a65a"/>
<rect x="587.63" y="629.67" width="4.55" height="31.63" fill="#f56954"/>
<rect x="587.63" y="611.33" width="4.55" height="18.33" fill="#3c8dbc"/>
<rect x="587.63" y="605.50" width="4.55" height="5.83" fill="#00c0ef"/>
<rect x="587.63" y="604.00" width="4.55" height="1.50" fill="#00a65a"/>
<rect x="594.05" y="631.83" width="4.55" height="29.47" fill="#f56954"/>
<rect x="594.05" y="618.83" width="4.55" height="13.00" fill="#3c8dbc"/>
<rect x="594.05" y="597.67" width="4.55" height="21.17" fill="#00a65a"/>
<rect x="594.05" y="593.33" width="4.55" height="4.33" fill="#00c0ef"/>
<rect x="594.05" y="591.33" width="4.55" height="2.00" fill="#f39c12"/>
<rect x="594.05" y="591.00" width="4.55" height="0.33" fill="#00a65a"/>
<rect x="600.46" y="639.17" width="4.55" height="22.13" fill="#f56954"/>
<rect x="600.46" y="622.67" width="4.55" height="16.50" fill="#3c8dbc"/>
<rect x="600.46" y="614.33" width="4.55" height="8.33" fill="#00a65a"/>
<rect x="600.46" y="609.33" width="4.55" height="5.00" fill="#00c0ef"/>
<rect x="600.46" y="607.67" width="4.55" height="1.67" fill="#f39c12"/>
<rect x="600.46" y="606.00" width="4.55" height="1.67" fill="#00a65a"/>
<rect x="606.87" y="628.83" width="4.55" height="32.47" fill="#f56954"/>
<rect x="606.87" y="605.00" width="4.55" height="23.83" fill="#3c8dbc"/>
<rect x="606.87" y="599.67" width="4.55" height="5.33" fill="#00a65a"/>
<rect x="606.87" y="595.00" width="4.55" height="4.67" fill="#00c0ef"/>
<rect x="606.87" y="593.00" width="4.55" height="2.00" fill="#f39c12"/>
<rect x="606.87" y="591.83" width="4.55" height="1.17" fill="#00a65a"/>
<rect x="613.29" y="638.83" width="4.55" height="22.47" fill="#f56954"/>
<rect x="613.29" y="625.17" width="4.55" height="13.67" fill="#3c8dbc"/>
<rect x="613.29" y="613.33" width="4.55" height="11.83" fill="#00a65a"/>
<rect x="613.29" y="609.17" width="4.55" height="4.17" fill="#00c0ef"/>
<rect x="613.29" y="608.00" width="4.55" height="1.17" fill="#f39c12"/>
<rect x="619.70" y="633.83" width="4.55" height="27.47" fill="#f56954"/>
<rect x="619.70" y="614.04" width="4.55" height="19.79" fill="#3c8dbc"/>
<rect x="619.70" y="607.79" width="4.55" height="6.25" fill="#00c0ef"/>
<rect x="619.70" y="605.71" width="4.55" height="2.08" fill="#f39c12"/>
<rect x="626.11" y="627.17" width="4.55" height="34.13" fill="#f56954"/>
<rect x="626.11" y="609.88" width="4.55" height="17.29" fill="#3c8dbc"/>
<rect x="626.11" y="600.50" width="4.55" height="9.38" fill="#00a65a"/>
<rect x="626.11" y="595.29" width="4.55" height="5.21" fill="#00c0ef"/>
<rect x="626.11" y="593.21" width="4.55" height="2.08" fill="#f39c12"/>
<rect x="632.52" y="629.04" width="4.55" height="32.26" fill="#f56954"/>
<rect x="632.52" y="607.79" width="4.55" height="21.25" fill="#3c8dbc"/>
<rect x="632.52" y="597.38" width="4.55" height="10.42" fill="#00a65a"/>
<rect x="632.52" y="592.17" width="4.55" height="5.21" fill="#00c0ef"/>
<rect x="632.52" y="590.71" width="4.55" height="1.46" fill="#f39c12"/>
<rect x="638.94" y="635.50" width="4.55" height="25.80" fill="#f56954"/>
<rect x="638.94" y="597.38" width="4.55" height="38.12" fill="#3c8dbc"/>
<rect x="638.94" y="585.29" width="4.55" height="12.08" fill="#00a65a"/>
<rect x="638.94" y="578.00" width="4.55" height="7.29" fill="#00c0ef"/>
<rect x="638.94" y="575.92" width="4.55" height="2.08" fill="#f39c12"/>
<rect x="645.35" y="626.12" width="4.55" height="35.17" fill="#f56954"/>
<rect x="645.35" y="615.08" width="4.55" height="11.04" fill="#3c8dbc"/>
<rect x="645.35" y="610.92" width="4.55" height="4.17" fill="#00a65a"/>
<rect x="645.35" y="606.75" width="4.55" height="4.17" fill="#00c0ef"/>
<rect x="645.35" y="598.62" width="4.55" height="8.12" fill="#f39c12"/>
<rect x="651.76" y="624.88" width="4.55" height="36.42" fill="#f56954"/>
<rect x="651.76" y="607.79" width="4.55" height="17.08" fill="#3c8dbc"/>
<rect x="651.76" y="587.58" width="4.55" height="20.21" fill="#00a65a"/>
<rect x="651.76" y="582.38" width="4.55" height="5.21" fill="#00c0ef"/>
<rect x="651.76" y="576.54" width="4.55" height="5.83" fill="#f39c12"/>
<rect x="651.76" y="575.08" width="4.55" height="1.46" fill="#00a65a"/>
<rect x="658.18" y="629.25" width="4.55" height="32.05" fill="#f56954"/>
<rect x="658.18" y="617.79" width="4.55" height="11.46" fill="#3c8dbc"/>
<rect x="658.18" y="600.08" width="4.55" height="17.71" fill="#00a65a"/>
<rect x="658.18" y="594.04" width="4.55" height="6.04" fill="#00c0ef"/>
<rect x="658.18" y="592.79" width="4.55" height="1.25" fill="#001f3f"/>
<rect x="664.59" y="626.54" width="4.55" height="34.76" fill="#f56954"/>
<rect x="664.59" y="617.79" width="4.55" height="8.75" fill="#3c8dbc"/>
<rect x="664.59" y="604.67" width="4.55" height="13.12" fill="#00a65a"/>
<rect x="664.59" y="599.46" width="4.55" height="5.21" fill="#00c0ef"/>
<rect x="664.59" y="594.04" width="4.55" height="5.42" fill="#f39c12"/>
<rect x="671.00" y="630.29" width="4.55" height="31.01" fill="#f56954"/>
<rect x="671.00" y="626.75" width="4.55" height="3.54" fill="#3c8dbc"/>
<rect x="671.00" y="623.83" width="4.55" height="2.92" fill="#00a65a"/>
<rect x="671.00" y="617.79" width="4.55" height="6.04" fill="#00c0ef"/>
<rect x="671.00" y="615.71" width="4.55" height="2.08" fill="#00a65a"/>
<rect x="677.42" y="629.67" width="4.55" height="31.63" fill="#f56954"/>
<rect x="677.42" y="608.83" width="4.55" height="20.83" fill="#3c8dbc"/>
<rect x="677.42" y="600.08" width="4.55" height="8.75" fill="#00a65a"/>
<rect x="677.42" y="584.88" width="4.55" height="15.21" fill="#00c0ef"/>
<rect x="677.42" y="583.83" width="4.55" height="1.04" fill="#f39c12"/>
<rect x="683.83" y="625.50" width="4.55" height="35.80" fill="#f56954"/>
<rect x="683.83" y="607.38" width="4.55" height="18.12" fill="#3c8dbc"/>
<rect x="683.83" y="590.08" width="4.55" height="17.29" fill="#00a65a"/>
<rect x="683.83" y="582.38" width="4.55" height="7.71" fill="#00c0ef"/>
<rect x="683.83" y="578.62" width="4.55" height="3.75" fill="#f39c12"/>
<rect x="683.83" y="577.38" width="4.55" height="1.25" fill="#00c0ef"/>
<rect x="690.24" y="631.12" width="4.55" height="30.17" fill="#f56954"/>
<rect x="690.24" y="621.12" width="4.55" height="10.00" fill="#3c8dbc"/>
<rect x="690.24" y="617.79" width="4.55" height="3.33" fill="#00a65a"/>
<rect x="690.24" y="610.50" width="4.55" height="7.29" fill="#00c0ef"/>
<rect x="690.24" y="544.88" width="4.55" height="65.62" fill="#001f3f"/>
<rect x="696.66" y="642.58" width="4.55" height="18.72" fill="#f56954"/>
<rect x="696.66" y="633.83" width="4.55" height="8.75" fill="#3c8dbc"/>
<rect x="696.66" y="627.58" width="4.55" height="6.25" fill="#00a65a"/>
<rect x="696.66" y="623.00" width="4.55" height="4.58" fill="#00c0ef"/>
<rect x="696.66" y="621.54" width="4.55" height="1.46" fill="#f39c12"/>
<rect x="703.07" y="643.21" width="4.55" height="18.09" fill="#f56954"/>
<rect x="703.07" y="640.08" width="4.55" height="3.12" fill="#3c8dbc"/>
<rect x="703.07" y="637.17" width="4.55" height="2.92" fill="#00a65a"/>
<rect x="703.07" y="625.50" width="4.55" height="11.67" fill="#00c0ef"/>
<rect x="703.07" y="624.04" width="4.55" height="1.46" fill="#001f3f"/>
<rect x="709.48" y="630.92" width="4.55" height="30.38" fill="#f56954"/>
<rect x="709.48" y="619.25" width="4.55" height="11.67" fill="#3c8dbc"/>
<rect x="709.48" y="611.54" width="4.55" height="7.71" fill="#00c0ef"/>
<rect x="709.48" y="610.08" width="4.55" height="1.46" fill="#001f3f"/>
<rect x="715.90" y="627.79" width="4.55" height="33.51" fill="#f56954"/>
<rect x="715.90" y="616.12" width="4.55" height="11.67" fill="#3c8dbc"/>
<rect x="715.90" y="604.67" width="4.55" height="11.46" fill="#00a65a"/>
<rect x="715.90" y="588.42" width="4.55" height="16.25" fill="#00c0ef"/>
<rect x="715.90" y="584.88" width="4.55" height="3.54" fill="#00a65a"/>
<rect x="722.31" y="630.08" width="4.55" height="31.22" fill="#f56954"/>
<rect x="722.31" y="621.75" width="4.55" height="8.33" fill="#3c8dbc"/>
<rect x="722.31" y="601.54" width="4.55" height="20.21" fill="#00a65a"/>
<rect x="722.31" y="600.08" width="4.55" height="1.46" fill="#f39c12"/>
<rect x="722.31" y="599.04" width="4.55" height="1.04" fill="#00c0ef"/>
<rect x="728.72" y="627.79" width="4.55" height="33.51" fill="#f56954"/>
<rect x="728.72" y="615.71" width="4.55" height="12.08" fill="#3c8dbc"/>
<rect x="728.72" y="611.96" width="4.55" height="3.75" fill="#00a65a"/>
<rect x="728.72" y="610.29" width="4.55" height="1.67" fill="#00c0ef"/>
<rect x="728.72" y="609.88" width="4.55" height="0.42" fill="#f39c12"/>
<rect x="735.14" y="632.38" width="4.55" height="28.92" fill="#f56954"/>
<rect x="735.14" y="604.25" width="4.55" height="28.12" fill="#3c8dbc"/>
<rect x="735.14" y="599.88" width="4.55" height="4.38" fill="#f39c12"/>
<rect x="735.14" y="583.83" width="4.55" height="16.04" fill="#0073b7"/>
<rect x="741.55" y="626.54" width="4.55" height="34.76" fill="#f56954"/>
<rect x="741.55" y="543.83" width="4.55" height="82.71" fill="#3c8dbc"/>
<rect x="741.55" y="538.42" width="4.55" height="5.42" fill="#00a65a"/>
<rect x="741.55" y="537.58" width="4.55" height="0.83" fill="#f39c12"/>
<rect x="741.55" y="526.96" width="4.55" height="10.62" fill="#0073b7"/>
<rect x="747.96" y="632.17" width="4.55" height="29.13" fill="#f56954"/>
<rect x="747.96" y="571.33" width="4.55" height="60.83" fill="#3c8dbc"/>
<rect x="747.96" y="568.21" width="4.55" height="3.12" fill="#f39c12"/>
<rect x="747.96" y="557.79" width="4.55" height="10.42" fill="#0073b7"/>
<rect x="754.38" y="626.96" width="4.55" height="34.34" fill="#f56954"/>
<rect x="754.38" y="606.75" width="4.55" height="20.21" fill="#3c8dbc"/>
<rect x="754.38" y="604.04" width="4.55" height="2.71" fill="#00a65a"/>
<rect x="754.38" y="588.62" width="4.55" height="15.42" fill="#0073b7"/>
<rect x="760.79" y="627.79" width="4.55" height="33.51" fill="#f56954"/>
<rect x="760.79" y="621.75" width="4.55" height="6.04" fill="#3c8dbc"/>
<rect x="760.79" y="620.92" width="4.55" height="0.83" fill="#f39c12"/>
<rect x="760.79" y="614.04" width="4.55" height="6.88" fill="#0073b7"/>
<rect x="767.20" y="635.08" width="4.55" height="26.22" fill="#f56954"/>
<rect x="767.20" y="609.25" width="4.55" height="25.83" fill="#3c8dbc"/>
<rect x="767.20" y="606.12" width="4.55" height="3.12" fill="#00a65a"/>
<rect x="767.20" y="603.62" width="4.55" height="2.50" fill="#f39c12"/>
<rect x="767.20" y="591.75" width="4.55" height="11.88" fill="#0073b7"/>
<rect x="773.62" y="629.94" width="4.55" height="31.36" fill="#f56954"/>
<rect x="773.62" y="600.78" width="4.55" height="29.17" fill="#3c8dbc"/>
<rect x="773.62" y="598.42" width="4.55" height="2.36" fill="#00a65a"/>
<rect x="773.62" y="590.78" width="4.55" height="7.64" fill="#0073b7"/>
<rect x="780.03" y="628.28" width="4.55" height="33.02" fill="#f56954"/>
<rect x="780.03" y="600.22" width="4.55" height="28.06" fill="#3c8dbc"/>
<rect x="780.03" y="597.03" width="4.55" height="3.19" fill="#00a65a"/>
<rect x="780.03" y="595.64" width="4.55" height="1.39" fill="#f39c12"/>
<rect x="780.03" y="583.83" width="4.55" height="11.81" fill="#0073b7"/>
<rect x="780.03" y="582.03" width="4.55" height="1.81" fill="#00c0ef"/>
<rect x="786.44" y="632.03" width="4.55" height="29.27" fill="#f56954"/>
<rect x="786.44" y="616.89" width="4.55" height="15.14" fill="#3c8dbc"/>
<rect x="786.44" y="615.08" width="4.55" height="1.81" fill="#00a65a"/>
<rect x="786.44" y="613.00" width="4.55" height="2.08" fill="#f39c12"/>
<rect x="786.44" y="604.39" width="4.55" height="8.61" fill="#0073b7"/>
<rect x="786.44" y="603.69" width="4.55" height="0.69" fill="#00a65a"/>
<rect x="792.86" y="632.03" width="4.55" height="29.27" fill="#f56954"/>
<rect x="792.86" y="621.61" width="4.55" height="10.42" fill="#3c8dbc"/>
<rect x="792.86" y="620.22" width="4.55" height="1.39" fill="#00a65a"/>
<rect x="792.86" y="608.56" width="4.55" height="11.67" fill="#0073b7"/>
<rect x="792.86" y="606.75" width="4.55" height="1.81" fill="#00a65a"/>
<rect x="799.27" y="644.67" width="4.55" height="16.63" fill="#f56954"/>
<rect x="799.27" y="643.28" width="4.55" height="1.39" fill="#3c8dbc"/>
<rect x="799.27" y="642.17" width="4.55" height="1.11" fill="#00a65a"/>
<rect x="799.27" y="637.17" width="4.55" height="5.00" fill="#0073b7"/>
<rect x="805.68" y="646.33" width="4.55" height="14.97" fill="#f56954"/>
<rect x="805.68" y="644.94" width="4.55" height="1.39" fill="#3c8dbc"/>
<rect x="805.68" y="642.86" width="4.55" height="2.08" fill="#00c0ef"/>
<rect x="805.68" y="636.89" width="4.55" height="5.97" fill="#0073b7"/>
<rect x="812.10" y="643.56" width="4.55" height="17.74" fill="#f56954"/>
<rect x="812.10" y="640.08" width="4.55" height="3.47" fill="#00c0ef"/>
<rect x="812.10" y="638.69" width="4.55" height="1.39" fill="#f39c12"/>
<rect x="812.10" y="633.00" width="4.55" height="5.69" fill="#0073b7"/>
<rect x="818.51" y="645.36" width="4.55" height="15.94" fill="#f56954"/>
<rect x="818.51" y="631.75" width="4.55" height="13.61" fill="#3c8dbc"/>
<rect x="818.51" y="630.36" width="4.55" height="1.39" fill="#00a65a"/>
<rect x="818.51" y="628.00" width="4.55" height="2.36" fill="#f39c12"/>
<rect x="818.51" y="623.14" width="4.55" height="4.86" fill="#0073b7"/>
<rect x="824.92" y="626.19" width="4.55" height="35.11" fill="#f56954"/>
<rect x="824.92" y="618.56" width="4.55" height="7.64" fill="#3c8dbc"/>
<rect x="824.92" y="615.78" width="4.55" height="2.78" fill="#00a65a"/>
<rect x="824.92" y="602.72" width="4.55" height="13.06" fill="#0073b7"/>
<rect x="824.92" y="601.75" width="4.55" height="0.97" fill="#001f3f"/>
<rect x="831.34" y="639.39" width="4.55" height="21.91" fill="#f56954"/>
<rect x="831.34" y="618.83" width="4.55" height="20.56" fill="#3c8dbc"/>
<rect x="831.34" y="617.44" width="4.55" height="1.39" fill="#f39c12"/>
<rect x="831.34" y="613.69" width="4.55" height="3.75" fill="#00a65a"/>
<rect x="831.34" y="611.89" width="4.55" height="1.81" fill="#0073b7"/>
<rect x="837.75" y="631.47" width="4.55" height="29.83" fill="#f56954"/>
<rect x="837.75" y="604.94" width="4.55" height="26.53" fill="#3c8dbc"/>
<rect x="837.75" y="603.28" width="4.55" height="1.67" fill="#00a65a"/>
<rect x="837.75" y="601.89" width="4.55" height="1.39" fill="#f39c12"/>
<rect x="837.75" y="600.08" width="4.55" height="1.81" fill="#0073b7"/>
<rect x="844.16" y="635.50" width="4.55" height="25.80" fill="#f56954"/>
<rect x="844.16" y="611.61" width="4.55" height="23.89" fill="#3c8dbc"/>
<rect x="844.16" y="609.25" width="4.55" height="2.36" fill="#00a65a"/>
<rect x="844.16" y="607.17" width="4.55" height="2.08" fill="#f39c12"/>
<rect x="850.58" y="641.47" width="4.55" height="19.83" fill="#f56954"/>
<rect x="850.58" y="638.00" width="4.55" height="3.47" fill="#3c8dbc"/>
<rect x="850.58" y="634.94" width="4.55" height="3.06" fill="#00a65a"/>
<rect x="856.99" y="641.06" width="4.55" height="20.24" fill="#f56954"/>
<rect x="856.99" y="636.89" width="4.55" height="4.17" fill="#3c8dbc"/>
<rect x="856.99" y="634.94" width="4.55" height="1.94" fill="#00a65a"/>
<rect x="863.40" y="635.92" width="4.55" height="25.38" fill="#f56954"/>
<rect x="863.40" y="633.83" width="4.55" height="2.08" fill="#3c8dbc"/>
<rect x="863.40" y="633.14" width="4.55" height="0.69" fill="#00c0ef"/>
<rect x="863.40" y="631.89" width="4.55" height="1.25" fill="#00a65a"/>
<rect x="869.82" y="626.89" width="4.55" height="34.41" fill="#f56954"/>
<rect x="869.82" y="615.08" width="4.55" height="11.81" fill="#3c8dbc"/>
<rect x="869.82" y="606.06" width="4.55" height="9.03" fill="#00a65a"/>
<rect x="869.82" y="603.56" width="4.55" height="2.50" fill="#f39c12"/>
<rect x="869.82" y="602.31" width="4.55" height="1.25" fill="#00a65a"/>
<rect x="876.23" y="632.72" width="4.55" height="28.58" fill="#f56954"/>
<rect x="876.23" y="626.19" width="4.55" height="6.53" fill="#3c8dbc"/>
<rect x="876.23" y="624.94" width="4.55" height="1.25" fill="#00a65a"/>
<rect x="882.64" y="640.08" width="4.55" height="21.22" fill="#f56954"/>
<rect x="882.64" y="634.53" width="4.55" height="5.56" fill="#3c8dbc"/>
<rect x="882.64" y="632.17" width="4.55" height="2.36" fill="#f39c12"/>
<rect x="889.06" y="633.56" width="4.55" height="27.74" fill="#f56954"/>
<rect x="889.06" y="628.56" width="4.55" height="5.00" fill="#3c8dbc"/>
<rect x="889.06" y="626.89" width="4.55" height="1.67" fill="#00a65a"/>
<rect x="895.47" y="631.33" width="4.55" height="29.97" fill="#f56954"/>
<rect x="895.47" y="627.17" width="4.55" height="4.17" fill="#3c8dbc"/>
<rect x="895.47" y="625.78" width="4.55" height="1.39" fill="#f39c12"/>
<rect x="895.47" y="625.22" width="4.55" height="0.56" fill="#00a65a"/>
<rect x="901.88" y="627.58" width="4.55" height="33.72" fill="#f56954"/>
<rect x="901.88" y="619.94" width="4.55" height="7.64" fill="#3c8dbc"/>
<rect x="901.88" y="616.89" width="4.55" height="3.06" fill="#00a65a"/>
<rect x="901.88" y="615.78" width="4.55" height="1.11" fill="#00a65a"/>
<rect x="908.30" y="633.14" width="4.55" height="28.16" fill="#f56954"/>
<rect x="908.30" y="625.08" width="4.55" height="8.06" fill="#3c8dbc"/>
<rect x="908.30" y="622.72" width="4.55" height="2.36" fill="#f39c12"/>
<rect x="908.30" y="620.92" width="4.55" height="1.81" fill="#00a65a"/>
<rect x="914.71" y="628.00" width="4.55" height="33.30" fill="#f56954"/>
<rect x="914.71" y="622.44" width="4.55" height="5.56" fill="#3c8dbc"/>
<rect x="914.71" y="620.92" width="4.55" height="1.53" fill="#00a65a"/>
<rect x="921.12" y="625.78" width="4.55" height="35.52" fill="#f56954"/>
<rect x="921.12" y="613.00" width="4.55" height="12.78" fill="#3c8dbc"/>
<rect x="921.12" y="608.28" width="4.55" height="4.72" fill="#00a65a"/>
<rect x="927.54" y="626.89" width="4.55" height="34.41" fill="#f56954"/>
<rect x="927.54" y="622.03" width="4.55" height="4.86" fill="#3c8dbc"/>
<rect x="927.54" y="618.56" width="4.55" height="3.47" fill="#f39c12"/>
<rect x="927.54" y="617.58" width="4.55" height="0.97" fill="#00a65a"/>
<rect x="933.95" y="626.61" width="4.55" height="34.69" fill="#f56954"/>
<rect x="933.95" y="622.44" width="4.55" height="4.17" fill="#3c8dbc"/>
<rect x="933.95" y="621.06" width="4.55" height="1.39" fill="#00a65a"/>
<rect x="940.36" y="627.86" width="4.55" height="33.44" fill="#f56954"/>
<rect x="940.36" y="624.81" width="4.55" height="3.06" fill="#3c8dbc"/>
<rect x="940.36" y="623.00" width="4.55" height="1.81" fill="#00a65a"/>
<rect x="940.36" y="621.33" width="4.55" height="1.67" fill="#f39c12"/>
<rect x="946.78" y="630.36" width="4.55" height="30.94" fill="#f56954"/>
<rect x="946.78" y="621.33" width="4.55" height="9.03" fill="#3c8dbc"/>
<rect x="946.78" y="618.56" width="4.55" height="2.78" fill="#f39c12"/>
<rect x="946.78" y="618.00" width="4.55" height="0.56" fill="#00a65a"/>
<rect x="953.19" y="628.28" width="4.55" height="33.02" fill="#f56954"/>
<rect x="953.19" y="617.44" width="4.55" height="10.83" fill="#3c8dbc"/>
<rect x="953.19" y="611.33" width="4.55" height="6.11" fill="#00a65a"/>
<rect x="953.19" y="609.94" width="4.55" height="1.39" fill="#f39c12"/>
<rect x="953.19" y="609.11" width="4.55" height="0.83" fill="#00a65a"/>
<rect x="959.60" y="627.17" width="4.55" height="34.13" fill="#f56954"/>
<rect x="959.60" y="623.83" width="4.55" height="3.33" fill="#3c8dbc"/>
<rect x="959.60" y="620.22" width="4.55" height="3.61" fill="#00a65a"/>
<rect x="959.60" y="619.67" width="4.55" height="0.56" fill="#00c0ef"/>
<rect x="966.02" y="631.06" width="4.55" height="30.24" fill="#f56954"/>
<rect x="966.02" y="617.58" width="4.55" height="13.47" fill="#3c8dbc"/>
<rect x="966.02" y="615.78" width="4.55" height="1.81" fill="#f39c12"/>
<rect x="972.43" y="634.53" width="4.55" height="26.77" fill="#f56954"/>
<rect x="972.43" y="625.50" width="4.55" height="9.03" fill="#3c8dbc"/>
<rect x="972.43" y="623.69" width="4.55" height="1.81" fill="#00a65a"/>
<rect x="972.43" y="622.17" width="4.55" height="1.53" fill="#00a65a"/>
<rect x="978.84" y="632.44" width="4.55" height="28.86" fill="#f56954"/>
<rect x="978.84" y="623.83" width="4.55" height="8.61" fill="#3c8dbc"/>
<rect x="978.84" y="623.42" width="4.55" height="0.42" fill="#00a65a"/>
<rect x="985.26" y="628.97" width="4.55" height="32.33" fill="#f56954"/>
<rect x="985.26" y="618.28" width="4.55" height="10.69" fill="#3c8dbc"/>
<rect x="985.26" y="613.69" width="4.55" height="4.58" fill="#00a65a"/>
<rect x="985.26" y="610.78" width="4.55" height="2.92" fill="#01ff70"/>
<rect x="991.67" y="632.17" width="4.55" height="29.13" fill="#f56954"/>
<rect x="991.67" y="623.42" width="4.55" height="8.75" fill="#3c8dbc"/>
<rect x="991.67" y="621.33" width="4.55" height="2.08" fill="#00a65a"/>
<rect x="998.08" y="628.56" width="4.55" height="32.74" fill="#f56954"/>
<rect x="998.08" y="618.56" width="4.55" height="10.00" fill="#3c8dbc"/>
<rect x="998.08" y="617.17" width="4.55" height="1.39" fill="#f39c12"/>
<rect x="998.08" y="613.28" width="4.55" height="3.89" fill="#01ff70"/>
<rect x="1004.50" y="625.50" width="4.55" height="35.80" fill="#f56954"/>
<rect x="1004.50" y="620.64" width="4.55" height="4.86" fill="#3c8dbc"/>
<rect x="1004.50" y="618.83" width="4.55" height="1.81" fill="#00a65a"/>
<rect x="1010.91" y="625.92" width="4.55" height="35.38" fill="#f56954"/>
<rect x="1010.91" y="622.03" width="4.55" height="3.89" fill="#3c8dbc"/>
<rect x="1010.91" y="620.22" width="4.55" height="1.81" fill="#f39c12"/>
<rect x="1017.32" y="634.53" width="4.55" height="26.77" fill="#f56954"/>
<rect x="1017.32" y="628.69" width="4.55" height="5.83" fill="#3c8dbc"/>
<rect x="1017.32" y="627.17" width="4.55" height="1.53" fill="#00a65a"/>
<rect x="1017.32" y="625.78" width="4.55" height="1.39" fill="#f39c12"/>
<rect x="1023.74" y="624.81" width="4.55" height="36.49" fill="#f56954"/>
<rect x="1023.74" y="619.94" width="4.55" height="4.86" fill="#3c8dbc"/>
<rect x="1023.74" y="617.17" width="4.55" height="2.78" fill="#00a65a"/>
<rect x="1023.74" y="615.36" width="4.55" height="1.81" fill="#3d9970"/>
<rect x="1030.15" y="625.50" width="4.55" height="35.80" fill="#f56954"/>
<rect x="1030.15" y="620.22" width="4.55" height="5.28" fill="#3c8dbc"/>
<rect x="1030.15" y="618.97" width="4.55" height="1.25" fill="#00c0ef"/>
<rect x="1036.56" y="624.81" width="4.55" height="36.49" fill="#f56954"/>
<rect x="1036.56" y="622.03" width="4.55" height="2.78" fill="#3c8dbc"/>
<rect x="1036.56" y="619.67" width="4.55" height="2.36" fill="#00a65a"/>
<rect x="1042.98" y="629.94" width="4.55" height="31.36" fill="#f56954"/>
<rect x="1042.98" y="623.83" width="4.55" height="6.11" fill="#3c8dbc"/>
<rect x="1042.98" y="613.00" width="4.55" height="10.83" fill="#3d9970"/>
<rect x="1042.98" y="610.22" width="4.55" height="2.78" fill="#01ff70"/>
<rect x="1049.39" y="628.28" width="4.55" height="33.02" fill="#f56954"/>
<rect x="1049.39" y="623.69" width="4.55" height="4.58" fill="#3c8dbc"/>
<rect x="1049.39" y="622.31" width="4.55" height="1.39" fill="#00a65a"/>
<rect x="1049.39" y="618.56" width="4.55" height="3.75" fill="#f39c12"/>
<rect x="1049.39" y="615.78" width="4.55" height="2.78" fill="#01ff70"/>
<rect x="1055.80" y="629.94" width="4.55" height="31.36" fill="#f56954"/>
<rect x="1055.80" y="626.61" width="4.55" height="3.33" fill="#3c8dbc"/>
<rect x="1055.80" y="624.11" width="4.55" height="2.50" fill="#00a65a"/>
<rect x="1055.80" y="622.72" width="4.55" height="1.39" fill="#f39c12"/>
<rect x="1055.80" y="622.31" width="4.55" height="0.42" fill="#3d9970"/>
<rect x="1062.22" y="643.83" width="4.55" height="17.47" fill="#f56954"/>
<rect x="1062.22" y="639.39" width="4.55" height="4.44" fill="#3c8dbc"/>
<rect x="1062.22" y="638.28" width="4.55" height="1.11" fill="#00a65a"/>
<rect x="1068.63" y="634.53" width="4.55" height="26.77" fill="#f56954"/>
<rect x="1068.63" y="628.28" width="4.55" height="6.25" fill="#3c8dbc"/>
<rect x="1068.63" y="622.44" width="4.55" height="5.83" fill="#00a65a"/>
<rect x="1068.63" y="620.22" width="4.55" height="2.22" fill="#f39c12"/>
<rect x="1075.04" y="625.78" width="4.55" height="35.52" fill="#f56954"/>
<rect x="1075.04" y="621.33" width="4.55" height="4.44" fill="#3c8dbc"/>
<rect x="1075.04" y="619.25" width="4.55" height="2.08" fill="#f39c12"/>
<rect x="1081.46" y="629.33" width="4.55" height="31.97" fill="#f56954"/>
<rect x="1081.46" y="627.17" width="4.55" height="2.17" fill="#3c8dbc"/>
<rect x="1081.46" y="625.50" width="4.55" height="1.67" fill="#00a65a"/>
<rect x="1081.46" y="624.33" width="4.55" height="1.17" fill="#f39c12"/>
<rect x="1087.87" y="630.00" width="4.55" height="31.30" fill="#f56954"/>
<rect x="1087.87" y="627.17" width="4.55" height="2.83" fill="#3c8dbc"/>
<rect x="1087.87" y="624.67" width="4.55" height="2.50" fill="#00a65a"/>
<rect x="1087.87" y="623.00" width="4.55" height="1.67" fill="#3d9970"/>
<rect x="1094.28" y="630.83" width="4.55" height="30.47" fill="#f56954"/>
<rect x="1094.28" y="629.33" width="4.55" height="1.50" fill="#3c8dbc"/>
<rect x="1094.28" y="628.00" width="4.55" height="1.33" fill="#00c0ef"/>
<rect x="1094.28" y="627.50" width="4.55" height="0.50" fill="#00a65a"/>
<rect x="1100.70" y="628.00" width="4.55" height="33.30" fill="#f56954"/>
<rect x="1100.70" y="623.33" width="4.55" height="4.67" fill="#3c8dbc"/>
<rect x="1100.70" y="619.67" width="4.55" height="3.67" fill="#00a65a"/>
<rect x="1100.70" y="617.33" width="4.55" height="2.33" fill="#3d9970"/>
<rect x="1107.11" y="628.83" width="4.55" height="32.47" fill="#f56954"/>
<rect x="1107.11" y="625.50" width="4.55" height="3.33" fill="#3c8dbc"/>
<rect x="1107.11" y="623.00" width="4.55" height="2.50" fill="#00a65a"/>
<rect x="1107.11" y="621.33" width="4.55" height="1.67" fill="#3d9970"/>
<rect x="1113.52" y="640.50" width="4.55" height="20.80" fill="#f56954"/>
<rect x="1113.52" y="638.00" width="4.55" height="2.50" fill="#f39c12"/>
<rect x="1113.52" y="637.67" width="4.55" height="0.33" fill="#00a65a"/>
<rect x="1119.94" y="642.17" width="4.55" height="19.13" fill="#f56954"/>
<rect x="1119.94" y="630.00" width="4.55" height="12.17" fill="#3c8dbc"/>
<rect x="1126.35" y="625.17" width="4.55" height="36.13" fill="#f56954"/>
<rect x="1126.35" y="620.50" width="4.55" height="4.67" fill="#3c8dbc"/>
<rect x="1126.35" y="618.00" width="4.55" height="2.50" fill="#00a65a"/>
<rect x="1126.35" y="604.33" width="4.55" height="13.67" fill="#f39c12"/>
<rect x="1126.35" y="603.83" width="4.55" height="0.50" fill="#00c0ef"/>
<rect x="1132.76" y="630.83" width="4.55" height="30.47" fill="#f56954"/>
<rect x="1132.76" y="623.83" width="4.55" height="7.00" fill="#3c8dbc"/>
<rect x="1132.76" y="564.67" width="4.55" height="59.17" fill="#001f3f"/>
<rect x="1132.76" y="563.33" width="4.55" height="1.33" fill="#00a65a"/>
<rect x="1139.18" y="628.00" width="4.55" height="33.30" fill="#f56954"/>
<rect x="1139.18" y="621.33" width="4.55" height="6.67" fill="#3c8dbc"/>
<rect x="1139.18" y="617.67" width="4.55" height="3.67" fill="#00a65a"/>
<rect x="1139.18" y="615.83" width="4.55" height="1.83" fill="#f39c12"/>
<rect x="1139.18" y="613.17" width="4.55" height="2.67" fill="#3d9970"/>
<rect x="1145.59" y="627.50" width="4.55" height="33.80" fill="#f56954"/>
<rect x="1145.59" y="622.17" width="4.55" height="5.33" fill="#3c8dbc"/>
<rect x="1145.59" y="620.83" width="4.55" height="1.33" fill="#00c0ef"/>
<rect x="1152.00" y="624.17" width="4.55" height="37.13" fill="#f56954"/>
<rect x="1152.00" y="620.00" width="4.55" height="4.17" fill="#3c8dbc"/>
<rect x="1152.00" y="618.83" width="4.55" height="1.17" fill="#00a65a"/>
<rect x="1152.00" y="615.67" width="4.55" height="3.17" fill="#f39c12"/>
<rect x="1152.00" y="614.17" width="4.55" height="1.50" fill="#3d9970"/>
<rect x="1158.42" y="630.17" width="4.55" height="31.13" fill="#f56954"/>
<rect x="1158.42" y="623.50" width="4.55" height="6.67" fill="#3c8dbc"/>
<rect x="1158.42" y="622.17" width="4.55" height="1.33" fill="#00a65a"/>
<rect x="1158.42" y="620.50" width="4.55" height="1.67" fill="#f39c12"/>
<rect x="1164.83" y="629.67" width="4.55" height="31.63" fill="#f56954"/>
<rect x="1164.83" y="625.50" width="4.55" height="4.17" fill="#3c8dbc"/>
<rect x="1164.83" y="624.33" width="4.55" height="1.17" fill="#f39c12"/>
<rect x="1164.83" y="624.00" width="4.55" height="0.33" fill="#00c0ef"/>
<rect x="1171.24" y="625.17" width="4.55" height="36.13" fill="#f56954"/>
<rect x="1171.24" y="620.00" width="4.55" height="5.17" fill="#3c8dbc"/>
<rect x="1171.24" y="618.67" width="4.55" height="1.33" fill="#00a65a"/>
<rect x="1177.66" y="630.17" width="4.55" height="31.13" fill="#f56954"/>
<rect x="1177.66" y="626.33" width="4.55" height="3.83" fill="#3c8dbc"/>
<rect x="1177.66" y="624.33" width="4.55" height="2.00" fill="#00a65a"/>
<rect x="1177.66" y="622.17" width="4.55" height="2.17" fill="#3d9970"/>
<rect x="1184.07" y="629.67" width="4.55" height="31.63" fill="#f56954"/>
<rect x="1184.07" y="614.17" width="4.55" height="15.50" fill="#3c8dbc"/>
<rect x="1184.07" y="611.33" width="4.55" height="2.83" fill="#00a65a"/>
<rect x="1184.07" y="609.00" width="4.55" height="2.33" fill="#f39c12"/>
<rect x="1190.48" y="629.33" width="4.55" height="31.97" fill="#f56954"/>
<rect x="1190.48" y="618.00" width="4.55" height="11.33" fill="#3c8dbc"/>
<rect x="1190.48" y="616.33" width="4.55" height="1.67" fill="#00a65a"/>
<rect x="1196.90" y="624.33" width="4.55" height="36.97" fill="#f56954"/>
<rect x="1196.90" y="613.83" width="4.55" height="10.50" fill="#3c8dbc"/>
<rect x="1196.90" y="611.67" width="4.55" height="2.17" fill="#00a65a"/>
<rect x="1196.90" y="609.00" width="4.55" height="2.67" fill="#f39c12"/>
<rect x="1203.31" y="626.67" width="4.55" height="34.63" fill="#f56954"/>
<rect x="1203.31" y="618.83" width="4.55" height="7.83" fill="#3c8dbc"/>
<rect x="1203.31" y="617.17" width="4.55" height="1.67" fill="#00a65a"/>
<rect x="1209.72" y="628.33" width="4.55" height="32.97" fill="#f56954"/>
<rect x="1209.72" y="622.67" width="4.55" height="5.67" fill="#3c8dbc"/>
<rect x="1209.72" y="620.00" width="4.55" height="2.67" fill="#00a65a"/>
<rect x="1216.14" y="627.17" width="4.55" height="34.13" fill="#f56954"/>
<rect x="1216.14" y="618.83" width="4.55" height="8.33" fill="#3c8dbc"/>
<rect x="1216.14" y="616.33" width="4.55" height="2.50" fill="#00a65a"/>
<rect x="1216.14" y="613.00" width="4.55" height="3.33" fill="#f39c12"/>
<rect x="1216.14" y="611.17" width="4.55" height="1.83" fill="#3d9970"/>
<rect x="1222.55" y="648.00" width="4.55" height="13.30" fill="#f56954"/>
<rect x="1222.55" y="638.00" width="4.55" height="10.00" fill="#3c8dbc"/>
<rect x="1222.55" y="636.83" width="4.55" height="1.17" fill="#f39c12"/>
<rect x="1222.55" y="630.67" width="4.55" height="6.17" fill="#3d9970"/>
<rect x="1228.96" y="644.67" width="4.55" height="16.63" fill="#f56954"/>
<rect x="1228.96" y="621.67" width="4.55" height="23.00" fill="#3c8dbc"/>
<rect x="1228.96" y="618.83" width="4.55" height="2.83" fill="#f39c12"/>
<rect x="1228.96" y="616.67" width="4.55" height="2.17" fill="#00a65a"/>
<rect x="1228.96" y="611.83" width="4.55" height="4.83" fill="#3d9970"/>
<rect x="1235.38" y="648.33" width="2.62" height="12.97" fill="#f56954"/>
<rect x="1235.38" y="638.83" width="2.62" height="9.50" fill="#3d9970"/>
</svg>
</body></html>
